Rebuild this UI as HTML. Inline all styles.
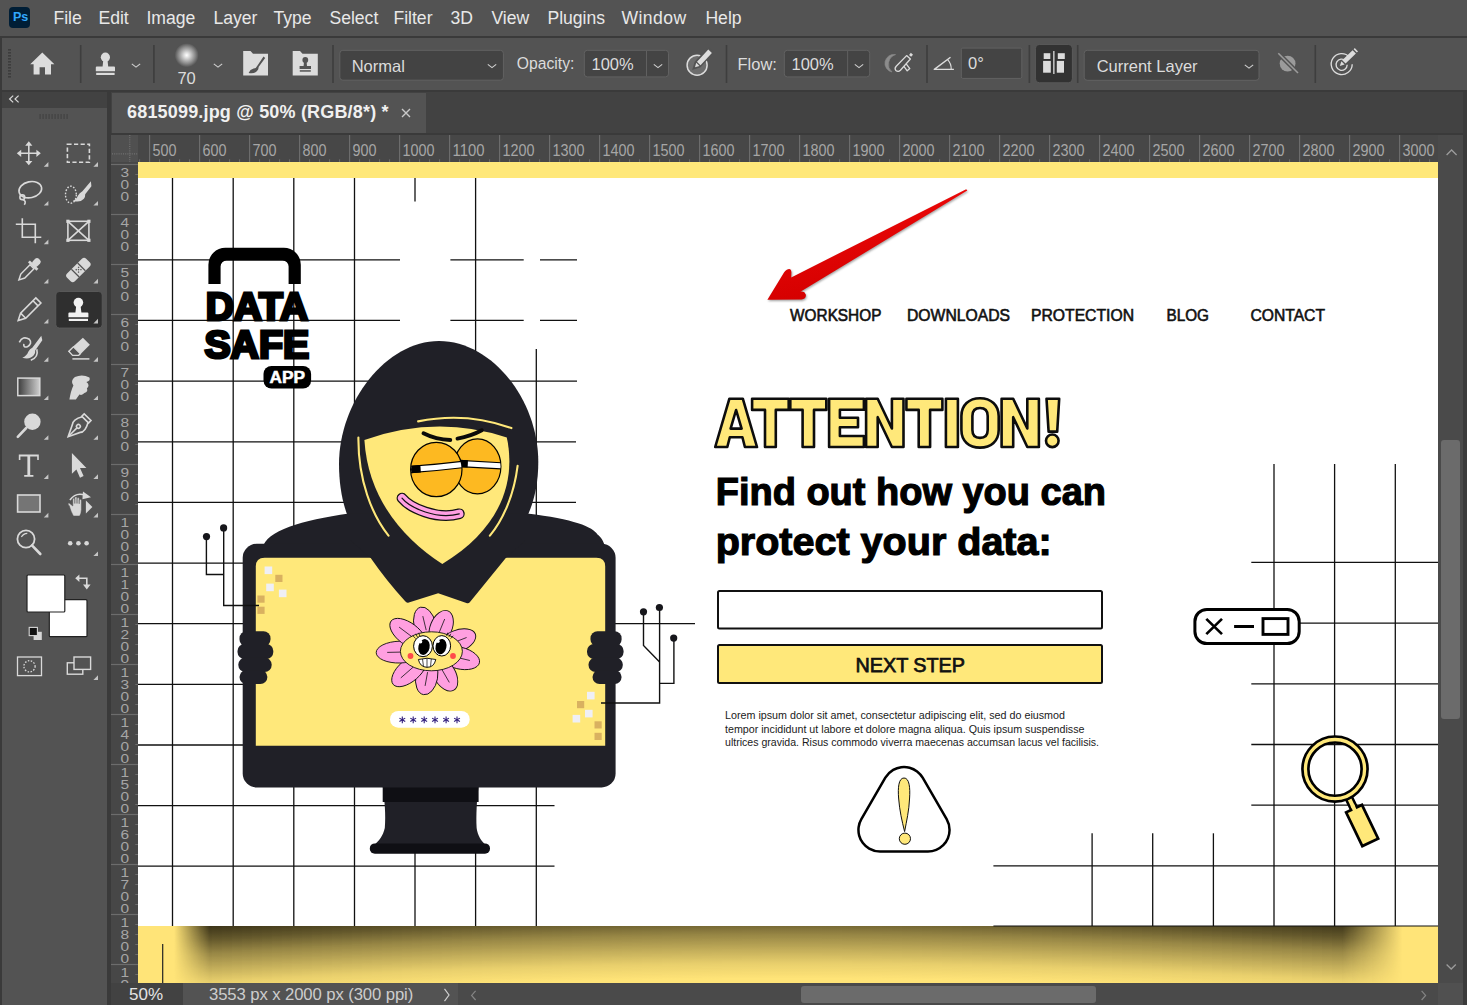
<!DOCTYPE html>
<html><head><meta charset="utf-8"><title>Photoshop</title>
<style>
*{box-sizing:border-box;margin:0;padding:0}
html,body{width:1467px;height:1005px;overflow:hidden;background:#535353;font-family:"Liberation Sans",sans-serif;color:#e6e6e6}
.abs{position:absolute}
#menubar{position:absolute;left:0;top:0;width:1467px;height:36px;background:#535353}
#menubar span{position:absolute;top:8px;font-size:17.6px;color:#e8e8e8;white-space:nowrap}
#sep1{position:absolute;left:0;top:36px;width:1467px;height:2px;background:#3a3a3a}
#optbar{position:absolute;left:2px;top:38px;width:1465px;height:52px;background:#535353}
#sep2{position:absolute;left:0;top:90px;width:1467px;height:2px;background:#3a3a3a}
#tabbar{position:absolute;left:111px;top:92px;width:1356px;height:42px;background:#424242}
#tab{position:absolute;left:1px;top:1px;width:314px;height:40px;background:#535353}
#tab b{position:absolute;left:15px;top:9px;letter-spacing:0.18px;font-size:18px;color:#f0f0f0;white-space:nowrap}
#tools{position:absolute;left:2px;top:92px;width:105px;height:913px;background:#535353}
#toolhead{position:absolute;left:0;top:0;width:105px;height:16px;background:#424242}
#gapL{position:absolute;left:107px;top:92px;width:4px;height:913px;background:#3a3a3a}
#edgeL{position:absolute;left:0;top:38px;width:2px;height:967px;background:#3a3a3a}
#rulerH{position:absolute;left:111px;top:134px;width:1327px;height:28px;background:#434343;overflow:hidden}
#rulerV{position:absolute;left:111px;top:162px;width:27px;height:821px;background:#434343;overflow:hidden}
#rcorner{position:absolute;left:111px;top:134px;width:27px;height:28px;background:#4f4f4f}
#canvas{position:absolute;left:138px;top:162px;width:1300px;height:821px;background:#fff;overflow:hidden}
#vscroll{position:absolute;left:1438px;top:134px;width:29px;height:849px;background:#4a4a4a}
#edgeR{position:absolute;left:1463px;top:92px;width:4px;height:913px;background:#3b3b3b}
#sep3{position:absolute;left:111px;top:133px;width:1352px;height:2px;background:#3a3a3a}
#status{position:absolute;left:111px;top:983px;width:1356px;height:22px;background:#4a4a4a}
</style></head><body>
<div id="menubar">
<div style="position:absolute;left:9.4px;top:7px;width:21px;height:20.6px;border-radius:4px;background:#001e36"></div>
<span style="left:13px;top:9.6px;font-size:12.6px;font-weight:bold;color:#31a8ff;letter-spacing:-0.2px">Ps</span>
<span style="left:53.4px">File</span><span style="left:98.4px">Edit</span><span style="left:146.4px">Image</span><span style="left:213.4px">Layer</span><span style="left:273.4px">Type</span><span style="left:329.4px">Select</span><span style="left:393.4px">Filter</span><span style="left:450.4px">3D</span><span style="left:491.4px">View</span><span style="left:547.4px">Plugins</span><span style="left:621.4px;letter-spacing:0.45px">Window</span><span style="left:705.4px">Help</span>
</div>
<div id="sep1"></div>
<div id="optbar"><svg width="1467" height="52" viewBox="0 38 1467 52" style="position:absolute;left:-2px;top:0;font-family:'Liberation Sans',sans-serif">
<defs><radialGradient id="brush"><stop offset="0" stop-color="#fff"/><stop offset="0.25" stop-color="#d8d8d8"/><stop offset="0.7" stop-color="#8a8a8a"/><stop offset="1" stop-color="#535353"/></radialGradient></defs>
<rect x="8" y="49" width="3" height="1.6" fill="#3d3d3d"/>
<rect x="8" y="52" width="3" height="1.6" fill="#3d3d3d"/>
<rect x="8" y="55" width="3" height="1.6" fill="#3d3d3d"/>
<rect x="8" y="58" width="3" height="1.6" fill="#3d3d3d"/>
<rect x="8" y="61" width="3" height="1.6" fill="#3d3d3d"/>
<rect x="8" y="64" width="3" height="1.6" fill="#3d3d3d"/>
<rect x="8" y="67" width="3" height="1.6" fill="#3d3d3d"/>
<rect x="8" y="70" width="3" height="1.6" fill="#3d3d3d"/>
<rect x="8" y="73" width="3" height="1.6" fill="#3d3d3d"/>
<rect x="8" y="76" width="3" height="1.6" fill="#3d3d3d"/>
<rect x="79.9" y="45" width="1.6" height="38" fill="#3e3e3e"/>
<rect x="153.1" y="45" width="1.6" height="38" fill="#3e3e3e"/>
<rect x="332.2" y="45" width="1.6" height="38" fill="#3e3e3e"/>
<rect x="725.7" y="45" width="1.6" height="38" fill="#3e3e3e"/>
<rect x="926.2" y="45" width="1.6" height="38" fill="#3e3e3e"/>
<rect x="1028.6000000000001" y="45" width="1.6" height="38" fill="#3e3e3e"/>
<rect x="1076.9" y="45" width="1.6" height="38" fill="#3e3e3e"/>
<rect x="1314.5" y="45" width="1.6" height="38" fill="#3e3e3e"/>
<path d="M42.3 52.6 L30.2 64.3 H33.6 V74.4 H39.6 V67.2 H45 V74.4 H51 V64.3 H54.4 Z" fill="#dcdcdc"/>
<g fill="#dcdcdc"><circle cx="105.4" cy="57.2" r="4.6"/><path d="M103.3 60 H107.5 L108.2 66.5 H114 Q115 66.5 115 67.5 V71.3 H95.8 V67.5 Q95.8 66.5 96.8 66.5 H102.6 Z"/><rect x="96.2" y="72.8" width="18.4" height="2.2"/></g>
<path d="M131.8 63.9 L136 67.1 L140.2 63.9" fill="none" stroke="#cfcfcf" stroke-width="1.15"/>
<circle cx="186.7" cy="55.2" r="12" fill="url(#brush)"/>
<text x="177.4" y="84.2" font-size="16.5" fill="#dcdcdc">70</text>
<path d="M213.8 63.9 L218 67.1 L222.2 63.9" fill="none" stroke="#cfcfcf" stroke-width="1.15"/>
<path d="M243.2 51 H250.5 L253 53.8 H268 V75.6 H243.2 Z" fill="#dcdcdc"/>
<path d="M263.5 56.5 L257.5 65.5 Q256.3 68.2 253.6 68.6 Q250 69.6 248.6 73 Q254 74 256.8 71.3 Q258.8 69.2 258.6 67 L265.2 58 Z" fill="#535353"/>
<path d="M292.7 51 H300 L302.5 53.8 H317.8 V75.6 H292.7 Z" fill="#dcdcdc"/>
<g fill="#535353"><circle cx="305.3" cy="60" r="2.9"/><path d="M304 62 H306.6 L307 66 H311 V69 H299.6 V66 H303.6 Z"/><rect x="299.8" y="70.2" width="11" height="1.5"/></g>
<rect x="339.8" y="50.3" width="163.59999999999997" height="29.900000000000006" rx="3" fill="#434343" stroke="#626262" stroke-width="1"/>
<text x="351.7" y="71.5" font-size="16.5" fill="#dcdcdc">Normal</text>
<path d="M487.8 64.4 L492 67.6 L496.2 64.4" fill="none" stroke="#cfcfcf" stroke-width="1.15"/>
<text x="516.8" y="69.3" font-size="16.3" fill="#dcdcdc" textLength="57.6" lengthAdjust="spacingAndGlyphs">Opacity:</text>
<rect x="584.3" y="50.3" width="84.20000000000005" height="26.60000000000001" rx="3" fill="#444444" stroke="#626262" stroke-width="1"/>
<rect x="646" y="50.8" width="1" height="25.6" fill="#606060"/>
<text x="591.5" y="69.5" font-size="16.5" fill="#dcdcdc">100%</text>
<path d="M653.8 64.4 L658 67.6 L662.2 64.4" fill="none" stroke="#cfcfcf" stroke-width="1.15"/>
<circle cx="697.1" cy="65.2" r="10" fill="#6d6d6d" stroke="#dcdcdc" stroke-width="1.5"/>
<path d="M712.6 52.6 L708.2 48.6 L695.6 62.2 L693.8 68.4 L700 66.4 Z" fill="#535353" stroke="#535353" stroke-width="2.2"/>
<path d="M711.9 52.9 L708.3 49.5 L697 61.7 L700.5 65.2 Z M696.2 62.8 L695 67.2 L699.5 66 Z" fill="#dcdcdc"/>
<text x="737.5" y="69.5" font-size="16.5" fill="#dcdcdc">Flow:</text>
<rect x="784.3" y="50.3" width="85.40000000000009" height="26.60000000000001" rx="3" fill="#444444" stroke="#626262" stroke-width="1"/>
<rect x="847.1" y="50.8" width="1" height="25.6" fill="#606060"/>
<text x="791.5" y="69.5" font-size="16.5" fill="#dcdcdc">100%</text>
<path d="M854.8 64.4 L859 67.6 L863.2 64.4" fill="none" stroke="#cfcfcf" stroke-width="1.15"/>
<path d="M895.6 54.6 A10.2 10.2 0 0 0 892 72 A7.6 7.6 0 0 1 895.6 54.6 Z" fill="#8c8c8c" stroke="#8c8c8c" stroke-width="0.6"/>
<g fill="#535353" stroke="#dcdcdc" stroke-width="1.3" stroke-linejoin="round"><path d="M903.2 65.4 L905.6 63.2 L909.8 68.6 L907.2 70.8 Z"/><path d="M906.6 55.6 L910.4 59 L900.4 70.2 Q898.2 72.4 895.8 70.4 Q894.2 68.4 896.2 66.2 Z"/></g>
<rect x="909.6" y="53.4" width="2.8" height="2.8" fill="#dcdcdc" transform="rotate(42 911 54.8)"/>
<path d="M953.9 69.4 H934.3 L950.5 57.3" fill="none" stroke="#dcdcdc" stroke-width="1.4" stroke-linejoin="round"/><path d="M947.6 59.6 Q951.4 63.6 951.2 69.2" fill="none" stroke="#dcdcdc" stroke-width="1.2"/>
<rect x="961.3" y="48.1" width="60.5" height="30.3" rx="1.5" fill="#444444" stroke="#626262" stroke-width="1"/>
<text x="968" y="68.8" font-size="16.5" fill="#dcdcdc">0°</text>
<rect x="1035.4" y="44.4" width="37" height="38.4" rx="4" fill="#323232" stroke="#5c5c5c" stroke-width="0.9"/>
<g fill="#dcdcdc"><rect x="1043.1" y="60.9" width="7.7" height="11.8"/><rect x="1043.7" y="53.2" width="6.6" height="5.8"/><rect x="1053.2" y="51" width="1.3" height="23"/><rect x="1056.8" y="60.9" width="7.2" height="11.8"/><rect x="1057.8" y="53.2" width="7" height="5.8"/></g>
<rect x="1084.2" y="50.3" width="174.79999999999995" height="30.0" rx="3" fill="#434343" stroke="#626262" stroke-width="1"/>
<text x="1096.7" y="71.5" font-size="16.5" fill="#dcdcdc">Current Layer</text>
<path d="M1244.8 64.9 L1249 68.1 L1253.2 64.9" fill="none" stroke="#cfcfcf" stroke-width="1.15"/>
<circle cx="1287.6" cy="63.6" r="7.9" fill="#9b9b9b"/><path d="M1278.6 53.6 L1297.8 72.8" stroke="#535353" stroke-width="4.4"/><path d="M1278.3 53.3 L1298 73" stroke="#9b9b9b" stroke-width="1.6"/>
<g fill="none" stroke="#dcdcdc" stroke-width="1.35"><path d="M1349.6 57.2 A10.5 10.5 0 1 0 1352.2 64.2"/><path d="M1345.6 60.8 A5.6 5.6 0 1 0 1347.2 64.8"/></g>
<path d="M1352.6 50.2 L1355.9 53.6 L1345.6 63.6 L1342.2 60.2 Z M1341.4 61.2 L1344.6 64.4 L1339.8 65.9 Z" fill="#dcdcdc"/><path d="M1353.6 49.3 L1356.8 52.6 L1358 51.4 L1354.8 48.1 Z" fill="#dcdcdc"/>
</svg></div>
<div id="sep2"></div>
<div id="edgeL"></div>
<div id="tools"><div id="toolhead"></div><svg width="105" height="913" viewBox="2 92 105 913" style="position:absolute;left:0;top:0;font-family:'Liberation Sans',sans-serif">
<path d="M13.2 95.6 L9.6 99 L13.2 102.4 M18.6 95.6 L15 99 L18.6 102.4" fill="none" stroke="#d9d9d9" stroke-width="1.2"/>
<rect x="39.4" y="114" width="1.3" height="5" fill="#444"/>
<rect x="42.4" y="114" width="1.3" height="5" fill="#444"/>
<rect x="45.4" y="114" width="1.3" height="5" fill="#444"/>
<rect x="48.4" y="114" width="1.3" height="5" fill="#444"/>
<rect x="51.4" y="114" width="1.3" height="5" fill="#444"/>
<rect x="54.4" y="114" width="1.3" height="5" fill="#444"/>
<rect x="57.4" y="114" width="1.3" height="5" fill="#444"/>
<rect x="60.4" y="114" width="1.3" height="5" fill="#444"/>
<rect x="63.4" y="114" width="1.3" height="5" fill="#444"/>
<rect x="66.4" y="114" width="1.3" height="5" fill="#444"/>
<rect x="55.8" y="291.5" width="46.4" height="36.5" rx="3.5" fill="#2f2f2f" stroke="#5e5e5e" stroke-width="0.8"/>
<path d="M48.400000000000006 162.10000000000002 V166.70000000000002 H43.8 Z" fill="#c4c4c4"/>
<path d="M98.0 162.10000000000002 V166.70000000000002 H93.4 Z" fill="#c4c4c4"/>
<path d="M48.400000000000006 201.0 V205.6 H43.8 Z" fill="#c4c4c4"/>
<path d="M98.0 201.0 V205.6 H93.4 Z" fill="#c4c4c4"/>
<path d="M48.400000000000006 239.60000000000002 V244.20000000000002 H43.8 Z" fill="#c4c4c4"/>
<path d="M48.400000000000006 278.8 V283.4 H43.8 Z" fill="#c4c4c4"/>
<path d="M98.0 278.8 V283.4 H93.4 Z" fill="#c4c4c4"/>
<path d="M48.400000000000006 318.8 V323.4 H43.8 Z" fill="#c4c4c4"/>
<path d="M98.0 318.8 V323.4 H93.4 Z" fill="#c4c4c4"/>
<path d="M48.400000000000006 357.1 V361.7 H43.8 Z" fill="#c4c4c4"/>
<path d="M98.0 357.1 V361.7 H93.4 Z" fill="#c4c4c4"/>
<path d="M48.400000000000006 395.40000000000003 V400.0 H43.8 Z" fill="#c4c4c4"/>
<path d="M98.0 395.40000000000003 V400.0 H93.4 Z" fill="#c4c4c4"/>
<path d="M48.400000000000006 435.2 V439.79999999999995 H43.8 Z" fill="#c4c4c4"/>
<path d="M98.0 435.2 V439.79999999999995 H93.4 Z" fill="#c4c4c4"/>
<path d="M48.400000000000006 474.3 V478.9 H43.8 Z" fill="#c4c4c4"/>
<path d="M98.0 474.3 V478.9 H93.4 Z" fill="#c4c4c4"/>
<path d="M48.400000000000006 512.8 V517.4 H43.8 Z" fill="#c4c4c4"/>
<path d="M98.0 512.8 V517.4 H93.4 Z" fill="#c4c4c4"/>
<path d="M98.0 551.4 V556.0 H93.4 Z" fill="#c4c4c4"/>
<g fill="none" stroke="#d9d9d9" stroke-width="1.6"><path d="M28.8 143.8 V162.8 M19.3 153.3 H38.3"/></g>
<path d="M28.8 141.3 l3.6 4.4 h-7.2 Z M28.8 165.3 l3.6 -4.4 h-7.2 Z M16.8 153.3 l4.4 -3.6 v7.2 Z M40.8 153.3 l-4.4 -3.6 v7.2 Z" fill="#d9d9d9"/>
<rect x="67.4" y="144.3" width="22" height="18" fill="none" stroke="#d9d9d9" stroke-width="1.6" stroke-dasharray="4.2 2.4"/>
<g fill="none" stroke="#d9d9d9" stroke-width="1.6"><ellipse cx="30.3" cy="189.7" rx="11.5" ry="8" transform="rotate(-12 30.3 189.7)"/><circle cx="22.3" cy="197.2" r="2.4"/><path d="M22.8 199.6 Q26.8 201.2 24.3 204.7"/></g>
<ellipse cx="70.9" cy="194.7" rx="5.4" ry="8.5" fill="none" stroke="#d9d9d9" stroke-width="1.4" stroke-dasharray="1.6 1.6"/>
<path d="M90.9 181.2 L82.4 191.2 Q79.4 192.7 77.9 195.7 Q76.4 199.7 72.9 200.7 Q79.9 203.2 83.9 198.7 Q85.4 196.7 85.2 194.2 L91.4 186.2 Z" fill="#d9d9d9"/>
<g fill="none" stroke="#d9d9d9" stroke-width="1.6" stroke-width="2"><path d="M22.3 218.3 V237.3 H41.3 M15.8 224.3 H35.3 V243.3"/></g>
<g fill="none" stroke="#d9d9d9" stroke-width="1.6"><rect x="67.9" y="221.3" width="21" height="19"/><path d="M67.9 221.3 L88.9 240.3 M88.9 221.3 L67.9 240.3"/></g>
<rect x="66.30000000000001" y="219.70000000000002" width="3.2" height="3.2" fill="#d9d9d9"/>
<rect x="87.30000000000001" y="219.70000000000002" width="3.2" height="3.2" fill="#d9d9d9"/>
<rect x="66.30000000000001" y="238.70000000000002" width="3.2" height="3.2" fill="#d9d9d9"/>
<rect x="87.30000000000001" y="238.70000000000002" width="3.2" height="3.2" fill="#d9d9d9"/>
<g transform="rotate(45 28.8 270)"><rect x="25.400000000000002" y="255" width="6.8" height="8.5" rx="2.6" fill="#d9d9d9"/><rect x="22.8" y="262.4" width="12" height="2.8" fill="#d9d9d9"/><path d="M26.0 265.5 V278.5 L28.8 284 L31.6 278.5 V265.5 Z" fill="none" stroke="#d9d9d9" stroke-width="1.5"/></g>
<g transform="rotate(-45 78.4 270)"><rect x="64.9" y="264.5" width="27" height="11" rx="3" fill="#d9d9d9"/><rect x="73.4" y="264.5" width="1.2" height="11" fill="#535353"/><rect x="82.2" y="264.5" width="1.2" height="11" fill="#535353"/>
<rect x="76.4" y="267.6" width="1.3" height="1.3" fill="#535353"/>
<rect x="79.80000000000001" y="267.6" width="1.3" height="1.3" fill="#535353"/>
<rect x="76.4" y="270.9" width="1.3" height="1.3" fill="#535353"/>
<rect x="79.80000000000001" y="270.9" width="1.3" height="1.3" fill="#535353"/>
<rect x="78.10000000000001" y="269.2" width="1.3" height="1.3" fill="#535353"/>
</g>
<g transform="rotate(45 28.8 310)" fill="none" stroke="#d9d9d9" stroke-width="1.6"><path d="M25.2 296.5 H32.4 V318 L28.8 325 L25.2 318 Z"/><path d="M25.2 300.5 H32.4 M25.2 318 H32.4"/></g>
<g fill="#f2f2f2"><circle cx="78.4" cy="302.6" r="4.8"/><path d="M76.2 306 H80.60000000000001 L81.4 312.4 H87.4 Q88.4 312.4 88.4 313.4 V317.2 H68.4 V313.4 Q68.4 312.4 69.4 312.4 H75.4 Z"/><rect x="68.80000000000001" y="318.8" width="19.2" height="2.2"/></g>
<g fill="none" stroke="#d9d9d9" stroke-width="1.6" stroke-width="1.4"><path d="M19.3 342.3 Q22.8 335.3 29.3 339.3 Q32.8 343.3 27.3 346.8 Q23.3 347.8 23.8 343.8"/><path d="M36.8 349.3 Q38.8 357.3 30.8 360.3"/></g>
<path d="M41.3 335.8 L32.3 347.8 Q29.8 348.8 28.3 351.8 Q26.8 355.8 22.3 357.8 Q30.3 359.8 33.8 355.3 Q35.6 352.90000000000003 35.2 350.5 L42.3 340.3 Z" fill="#d9d9d9"/>
<path d="M82.9 337.8 L89.9 344.8 L78.9 355.8 H72.4 L67.9 351.3 Z" fill="#d9d9d9"/><path d="M73.4 346.8 L80.4 353.8 L78.60000000000001 355.3 H72.60000000000001 L69.0 351.3 Z" fill="#535353" stroke="#d9d9d9" stroke-width="1.2"/><path d="M72.4 358.90000000000003 H89.4" stroke="#d9d9d9" stroke-width="1.5"/>
<defs><linearGradient id="gr"><stop offset="0" stop-color="#3c3c3c"/><stop offset="1" stop-color="#d0d0d0"/></linearGradient></defs><rect x="17.8" y="378.1" width="22" height="17.5" fill="url(#gr)" stroke="#d9d9d9" stroke-width="1.5"/>
<path d="M69.4 399.6 Q70.9 390.6 73.4 385.6 Q69.9 381.1 74.9 377.1 Q82.4 373.6 89.4 377.6 Q90.9 380.6 86.4 382.1 Q90.4 385.1 86.9 388.6 Q88.4 391.6 84.4 393.1 Q82.4 395.6 79.4 394.6 L75.9 399.6 Z" fill="#d9d9d9"/>
<circle cx="32.4" cy="421.79999999999995" r="8.2" fill="#d9d9d9"/><path d="M26.2 428.0 L17.8 436.9" stroke="#d9d9d9" stroke-width="2.6" stroke-linecap="round"/>
<g transform="rotate(45 78.4 426.4)" fill="none" stroke="#d9d9d9" stroke-width="1.6" stroke-width="1.5"><path d="M73.60000000000001 413.4 H83.2 V416.79999999999995 H73.60000000000001 Z"/><path d="M74.4 416.79999999999995 Q69.4 425.4 72.9 429.4 L78.4 440.9 L83.9 429.4 Q87.4 425.4 82.4 416.79999999999995"/><path d="M78.4 440.4 V428.4"/><circle cx="78.4" cy="426.4" r="1.9"/></g>
<path d="M18.8 454.5 H38.8 V460.0 H37.2 V456.5 H30.2 V475.0 H33.4 V476.7 H24.200000000000003 V475.0 H27.400000000000002 V456.5 H20.4 V460.0 H18.8 Z" fill="#d9d9d9"/>
<path d="M71.9 453.0 L86.4 468.0 H80.0 L83.60000000000001 476.1 L80.0 477.7 L76.4 469.5 L71.9 473.8 Z" fill="#d9d9d9"/>
<rect x="17.6" y="495" width="22.4" height="17" fill="#757575" stroke="#d9d9d9" stroke-width="1.6"/>
<path d="M69.9 500 Q76.4 491.5 85.4 495.5" fill="none" stroke="#d9d9d9" stroke-width="1.6"/><path d="M83.0 491.6 L91.0 497.2 L82.4 499.2 Z" fill="#d9d9d9"/>
<path d="M85.9 500.5 L92.4 507 L85.9 513.5 Z" fill="#d9d9d9"/>
<path d="M69.4 506 Q66.9 503.5 69.10000000000001 503 L72.80000000000001 506 V499 Q73.7 497.4 74.80000000000001 499 V503.5 V497.5 Q75.9 496 77.0 497.5 V503.5 V498.2 Q78.10000000000001 496.7 79.2 498.2 V503.8 V500 Q80.30000000000001 498.6 81.4 500 V509.5 Q81.2 514 79.7 516 H73.4 Q70.80000000000001 511.5 69.4 506 Z" fill="#d9d9d9" stroke="#535353" stroke-width="0.5"/>
<circle cx="26.0" cy="539.0" r="8.6" fill="none" stroke="#d9d9d9" stroke-width="1.8"/><path d="M32.0 545.4 L40.3 554.0" stroke="#d9d9d9" stroke-width="2.6" stroke-linecap="round"/><path d="M21.4 537.1 Q23.3 533.4 27.3 533.3000000000001" fill="none" stroke="#d9d9d9" stroke-width="1.2"/>
<circle cx="70.2" cy="543.2" r="2.3" fill="#d9d9d9"/>
<circle cx="78.4" cy="543.2" r="2.3" fill="#d9d9d9"/>
<circle cx="86.60000000000001" cy="543.2" r="2.3" fill="#d9d9d9"/>
<rect x="49.3" y="599.7" width="37.7" height="37" rx="1" fill="#fff" stroke="#222" stroke-width="1.2"/>
<rect x="27" y="575" width="37.8" height="37" rx="1" fill="#fff" stroke="#222" stroke-width="1.2"/>
<path d="M77.5 578.2 H86.8 V586" fill="none" stroke="#d9d9d9" stroke-width="1.6"/><path d="M79.4 574.4 L75.2 578.2 L79.4 582 Z M83 584.5 L86.8 589.4 L90.6 584.5 Z" fill="#d9d9d9"/>
<rect x="33.6" y="631.8" width="8.2" height="8.2" fill="#d6d6d6"/><rect x="29.2" y="627.4" width="8.2" height="8.2" fill="#111" stroke="#d6d6d6" stroke-width="1.1"/>
<rect x="17.5" y="657" width="24" height="18.6" fill="none" stroke="#d9d9d9" stroke-width="1.3"/><circle cx="29.5" cy="666.3" r="5.6" fill="none" stroke="#d9d9d9" stroke-width="1.3" stroke-dasharray="1.5 1.5"/>
<rect x="67.3" y="662.8" width="15.5" height="11.4" fill="#535353" stroke="#d9d9d9" stroke-width="1.4"/><rect x="74" y="657" width="16.6" height="12.4" fill="#535353" stroke="#d9d9d9" stroke-width="1.4"/>
<path d="M98.0 675.3 V679.9 H93.4 Z" fill="#c4c4c4"/>
</svg></div>
<div id="gapL"></div>
<div id="tabbar"><div id="tab"><b>6815099.jpg @ 50% (RGB/8*) *</b><svg width="14" height="14" style="position:absolute;left:287px;top:13.2px"><path d="M3 3 L11 11 M11 3 L3 11" stroke="#c9c9c9" stroke-width="1.4"/></svg></div></div>
<svg width="1327" height="29" viewBox="111 133 1327 29" style="position:absolute;left:111px;top:133px;font-family:'Liberation Sans',sans-serif">
<rect x="111" y="133" width="1327" height="29" fill="#474747"/><rect x="111" y="133" width="1327" height="2" fill="#3a3a3a"/>
<rect x="139.1" y="159.3" width="1" height="2.7" fill="#6c6c6c"/>
<rect x="149.0" y="135" width="1.2" height="27" fill="#6c6c6c"/>
<text x="152.5" y="156" font-size="16" fill="#a6a6a6" textLength="24.0" lengthAdjust="spacingAndGlyphs">500</text>
<rect x="159.1" y="159.3" width="1" height="2.7" fill="#6c6c6c"/>
<rect x="169.1" y="159.3" width="1" height="2.7" fill="#6c6c6c"/>
<rect x="179.1" y="159.3" width="1" height="2.7" fill="#6c6c6c"/>
<rect x="189.1" y="159.3" width="1" height="2.7" fill="#6c6c6c"/>
<rect x="199.0" y="135" width="1.2" height="27" fill="#6c6c6c"/>
<text x="202.5" y="156" font-size="16" fill="#a6a6a6" textLength="24.0" lengthAdjust="spacingAndGlyphs">600</text>
<rect x="209.1" y="159.3" width="1" height="2.7" fill="#6c6c6c"/>
<rect x="219.1" y="159.3" width="1" height="2.7" fill="#6c6c6c"/>
<rect x="229.1" y="159.3" width="1" height="2.7" fill="#6c6c6c"/>
<rect x="239.1" y="159.3" width="1" height="2.7" fill="#6c6c6c"/>
<rect x="249.0" y="135" width="1.2" height="27" fill="#6c6c6c"/>
<text x="252.5" y="156" font-size="16" fill="#a6a6a6" textLength="24.0" lengthAdjust="spacingAndGlyphs">700</text>
<rect x="259.1" y="159.3" width="1" height="2.7" fill="#6c6c6c"/>
<rect x="269.1" y="159.3" width="1" height="2.7" fill="#6c6c6c"/>
<rect x="279.1" y="159.3" width="1" height="2.7" fill="#6c6c6c"/>
<rect x="289.1" y="159.3" width="1" height="2.7" fill="#6c6c6c"/>
<rect x="299.0" y="135" width="1.2" height="27" fill="#6c6c6c"/>
<text x="302.5" y="156" font-size="16" fill="#a6a6a6" textLength="24.0" lengthAdjust="spacingAndGlyphs">800</text>
<rect x="309.1" y="159.3" width="1" height="2.7" fill="#6c6c6c"/>
<rect x="319.1" y="159.3" width="1" height="2.7" fill="#6c6c6c"/>
<rect x="329.1" y="159.3" width="1" height="2.7" fill="#6c6c6c"/>
<rect x="339.1" y="159.3" width="1" height="2.7" fill="#6c6c6c"/>
<rect x="349.0" y="135" width="1.2" height="27" fill="#6c6c6c"/>
<text x="352.5" y="156" font-size="16" fill="#a6a6a6" textLength="24.0" lengthAdjust="spacingAndGlyphs">900</text>
<rect x="359.1" y="159.3" width="1" height="2.7" fill="#6c6c6c"/>
<rect x="369.1" y="159.3" width="1" height="2.7" fill="#6c6c6c"/>
<rect x="379.1" y="159.3" width="1" height="2.7" fill="#6c6c6c"/>
<rect x="389.1" y="159.3" width="1" height="2.7" fill="#6c6c6c"/>
<rect x="399.0" y="135" width="1.2" height="27" fill="#6c6c6c"/>
<text x="402.5" y="156" font-size="16" fill="#a6a6a6" textLength="32.0" lengthAdjust="spacingAndGlyphs">1000</text>
<rect x="409.1" y="159.3" width="1" height="2.7" fill="#6c6c6c"/>
<rect x="419.1" y="159.3" width="1" height="2.7" fill="#6c6c6c"/>
<rect x="429.1" y="159.3" width="1" height="2.7" fill="#6c6c6c"/>
<rect x="439.1" y="159.3" width="1" height="2.7" fill="#6c6c6c"/>
<rect x="449.0" y="135" width="1.2" height="27" fill="#6c6c6c"/>
<text x="452.5" y="156" font-size="16" fill="#a6a6a6" textLength="32.0" lengthAdjust="spacingAndGlyphs">1100</text>
<rect x="459.1" y="159.3" width="1" height="2.7" fill="#6c6c6c"/>
<rect x="469.1" y="159.3" width="1" height="2.7" fill="#6c6c6c"/>
<rect x="479.1" y="159.3" width="1" height="2.7" fill="#6c6c6c"/>
<rect x="489.1" y="159.3" width="1" height="2.7" fill="#6c6c6c"/>
<rect x="499.0" y="135" width="1.2" height="27" fill="#6c6c6c"/>
<text x="502.5" y="156" font-size="16" fill="#a6a6a6" textLength="32.0" lengthAdjust="spacingAndGlyphs">1200</text>
<rect x="509.1" y="159.3" width="1" height="2.7" fill="#6c6c6c"/>
<rect x="519.1" y="159.3" width="1" height="2.7" fill="#6c6c6c"/>
<rect x="529.1" y="159.3" width="1" height="2.7" fill="#6c6c6c"/>
<rect x="539.1" y="159.3" width="1" height="2.7" fill="#6c6c6c"/>
<rect x="549.0" y="135" width="1.2" height="27" fill="#6c6c6c"/>
<text x="552.5" y="156" font-size="16" fill="#a6a6a6" textLength="32.0" lengthAdjust="spacingAndGlyphs">1300</text>
<rect x="559.1" y="159.3" width="1" height="2.7" fill="#6c6c6c"/>
<rect x="569.1" y="159.3" width="1" height="2.7" fill="#6c6c6c"/>
<rect x="579.1" y="159.3" width="1" height="2.7" fill="#6c6c6c"/>
<rect x="589.1" y="159.3" width="1" height="2.7" fill="#6c6c6c"/>
<rect x="599.0" y="135" width="1.2" height="27" fill="#6c6c6c"/>
<text x="602.5" y="156" font-size="16" fill="#a6a6a6" textLength="32.0" lengthAdjust="spacingAndGlyphs">1400</text>
<rect x="609.1" y="159.3" width="1" height="2.7" fill="#6c6c6c"/>
<rect x="619.1" y="159.3" width="1" height="2.7" fill="#6c6c6c"/>
<rect x="629.1" y="159.3" width="1" height="2.7" fill="#6c6c6c"/>
<rect x="639.1" y="159.3" width="1" height="2.7" fill="#6c6c6c"/>
<rect x="649.0" y="135" width="1.2" height="27" fill="#6c6c6c"/>
<text x="652.5" y="156" font-size="16" fill="#a6a6a6" textLength="32.0" lengthAdjust="spacingAndGlyphs">1500</text>
<rect x="659.1" y="159.3" width="1" height="2.7" fill="#6c6c6c"/>
<rect x="669.1" y="159.3" width="1" height="2.7" fill="#6c6c6c"/>
<rect x="679.1" y="159.3" width="1" height="2.7" fill="#6c6c6c"/>
<rect x="689.1" y="159.3" width="1" height="2.7" fill="#6c6c6c"/>
<rect x="699.0" y="135" width="1.2" height="27" fill="#6c6c6c"/>
<text x="702.5" y="156" font-size="16" fill="#a6a6a6" textLength="32.0" lengthAdjust="spacingAndGlyphs">1600</text>
<rect x="709.1" y="159.3" width="1" height="2.7" fill="#6c6c6c"/>
<rect x="719.1" y="159.3" width="1" height="2.7" fill="#6c6c6c"/>
<rect x="729.1" y="159.3" width="1" height="2.7" fill="#6c6c6c"/>
<rect x="739.1" y="159.3" width="1" height="2.7" fill="#6c6c6c"/>
<rect x="749.0" y="135" width="1.2" height="27" fill="#6c6c6c"/>
<text x="752.5" y="156" font-size="16" fill="#a6a6a6" textLength="32.0" lengthAdjust="spacingAndGlyphs">1700</text>
<rect x="759.1" y="159.3" width="1" height="2.7" fill="#6c6c6c"/>
<rect x="769.1" y="159.3" width="1" height="2.7" fill="#6c6c6c"/>
<rect x="779.1" y="159.3" width="1" height="2.7" fill="#6c6c6c"/>
<rect x="789.1" y="159.3" width="1" height="2.7" fill="#6c6c6c"/>
<rect x="799.0" y="135" width="1.2" height="27" fill="#6c6c6c"/>
<text x="802.5" y="156" font-size="16" fill="#a6a6a6" textLength="32.0" lengthAdjust="spacingAndGlyphs">1800</text>
<rect x="809.1" y="159.3" width="1" height="2.7" fill="#6c6c6c"/>
<rect x="819.1" y="159.3" width="1" height="2.7" fill="#6c6c6c"/>
<rect x="829.1" y="159.3" width="1" height="2.7" fill="#6c6c6c"/>
<rect x="839.1" y="159.3" width="1" height="2.7" fill="#6c6c6c"/>
<rect x="849.0" y="135" width="1.2" height="27" fill="#6c6c6c"/>
<text x="852.5" y="156" font-size="16" fill="#a6a6a6" textLength="32.0" lengthAdjust="spacingAndGlyphs">1900</text>
<rect x="859.1" y="159.3" width="1" height="2.7" fill="#6c6c6c"/>
<rect x="869.1" y="159.3" width="1" height="2.7" fill="#6c6c6c"/>
<rect x="879.1" y="159.3" width="1" height="2.7" fill="#6c6c6c"/>
<rect x="889.1" y="159.3" width="1" height="2.7" fill="#6c6c6c"/>
<rect x="899.0" y="135" width="1.2" height="27" fill="#6c6c6c"/>
<text x="902.5" y="156" font-size="16" fill="#a6a6a6" textLength="32.0" lengthAdjust="spacingAndGlyphs">2000</text>
<rect x="909.1" y="159.3" width="1" height="2.7" fill="#6c6c6c"/>
<rect x="919.1" y="159.3" width="1" height="2.7" fill="#6c6c6c"/>
<rect x="929.1" y="159.3" width="1" height="2.7" fill="#6c6c6c"/>
<rect x="939.1" y="159.3" width="1" height="2.7" fill="#6c6c6c"/>
<rect x="949.0" y="135" width="1.2" height="27" fill="#6c6c6c"/>
<text x="952.5" y="156" font-size="16" fill="#a6a6a6" textLength="32.0" lengthAdjust="spacingAndGlyphs">2100</text>
<rect x="959.1" y="159.3" width="1" height="2.7" fill="#6c6c6c"/>
<rect x="969.1" y="159.3" width="1" height="2.7" fill="#6c6c6c"/>
<rect x="979.1" y="159.3" width="1" height="2.7" fill="#6c6c6c"/>
<rect x="989.1" y="159.3" width="1" height="2.7" fill="#6c6c6c"/>
<rect x="999.0" y="135" width="1.2" height="27" fill="#6c6c6c"/>
<text x="1002.5" y="156" font-size="16" fill="#a6a6a6" textLength="32.0" lengthAdjust="spacingAndGlyphs">2200</text>
<rect x="1009.1" y="159.3" width="1" height="2.7" fill="#6c6c6c"/>
<rect x="1019.1" y="159.3" width="1" height="2.7" fill="#6c6c6c"/>
<rect x="1029.1" y="159.3" width="1" height="2.7" fill="#6c6c6c"/>
<rect x="1039.1" y="159.3" width="1" height="2.7" fill="#6c6c6c"/>
<rect x="1049.0" y="135" width="1.2" height="27" fill="#6c6c6c"/>
<text x="1052.5" y="156" font-size="16" fill="#a6a6a6" textLength="32.0" lengthAdjust="spacingAndGlyphs">2300</text>
<rect x="1059.1" y="159.3" width="1" height="2.7" fill="#6c6c6c"/>
<rect x="1069.1" y="159.3" width="1" height="2.7" fill="#6c6c6c"/>
<rect x="1079.1" y="159.3" width="1" height="2.7" fill="#6c6c6c"/>
<rect x="1089.1" y="159.3" width="1" height="2.7" fill="#6c6c6c"/>
<rect x="1099.0" y="135" width="1.2" height="27" fill="#6c6c6c"/>
<text x="1102.5" y="156" font-size="16" fill="#a6a6a6" textLength="32.0" lengthAdjust="spacingAndGlyphs">2400</text>
<rect x="1109.1" y="159.3" width="1" height="2.7" fill="#6c6c6c"/>
<rect x="1119.1" y="159.3" width="1" height="2.7" fill="#6c6c6c"/>
<rect x="1129.1" y="159.3" width="1" height="2.7" fill="#6c6c6c"/>
<rect x="1139.1" y="159.3" width="1" height="2.7" fill="#6c6c6c"/>
<rect x="1149.0" y="135" width="1.2" height="27" fill="#6c6c6c"/>
<text x="1152.5" y="156" font-size="16" fill="#a6a6a6" textLength="32.0" lengthAdjust="spacingAndGlyphs">2500</text>
<rect x="1159.1" y="159.3" width="1" height="2.7" fill="#6c6c6c"/>
<rect x="1169.1" y="159.3" width="1" height="2.7" fill="#6c6c6c"/>
<rect x="1179.1" y="159.3" width="1" height="2.7" fill="#6c6c6c"/>
<rect x="1189.1" y="159.3" width="1" height="2.7" fill="#6c6c6c"/>
<rect x="1199.0" y="135" width="1.2" height="27" fill="#6c6c6c"/>
<text x="1202.5" y="156" font-size="16" fill="#a6a6a6" textLength="32.0" lengthAdjust="spacingAndGlyphs">2600</text>
<rect x="1209.1" y="159.3" width="1" height="2.7" fill="#6c6c6c"/>
<rect x="1219.1" y="159.3" width="1" height="2.7" fill="#6c6c6c"/>
<rect x="1229.1" y="159.3" width="1" height="2.7" fill="#6c6c6c"/>
<rect x="1239.1" y="159.3" width="1" height="2.7" fill="#6c6c6c"/>
<rect x="1249.0" y="135" width="1.2" height="27" fill="#6c6c6c"/>
<text x="1252.5" y="156" font-size="16" fill="#a6a6a6" textLength="32.0" lengthAdjust="spacingAndGlyphs">2700</text>
<rect x="1259.1" y="159.3" width="1" height="2.7" fill="#6c6c6c"/>
<rect x="1269.1" y="159.3" width="1" height="2.7" fill="#6c6c6c"/>
<rect x="1279.1" y="159.3" width="1" height="2.7" fill="#6c6c6c"/>
<rect x="1289.1" y="159.3" width="1" height="2.7" fill="#6c6c6c"/>
<rect x="1299.0" y="135" width="1.2" height="27" fill="#6c6c6c"/>
<text x="1302.5" y="156" font-size="16" fill="#a6a6a6" textLength="32.0" lengthAdjust="spacingAndGlyphs">2800</text>
<rect x="1309.1" y="159.3" width="1" height="2.7" fill="#6c6c6c"/>
<rect x="1319.1" y="159.3" width="1" height="2.7" fill="#6c6c6c"/>
<rect x="1329.1" y="159.3" width="1" height="2.7" fill="#6c6c6c"/>
<rect x="1339.1" y="159.3" width="1" height="2.7" fill="#6c6c6c"/>
<rect x="1349.0" y="135" width="1.2" height="27" fill="#6c6c6c"/>
<text x="1352.5" y="156" font-size="16" fill="#a6a6a6" textLength="32.0" lengthAdjust="spacingAndGlyphs">2900</text>
<rect x="1359.1" y="159.3" width="1" height="2.7" fill="#6c6c6c"/>
<rect x="1369.1" y="159.3" width="1" height="2.7" fill="#6c6c6c"/>
<rect x="1379.1" y="159.3" width="1" height="2.7" fill="#6c6c6c"/>
<rect x="1389.1" y="159.3" width="1" height="2.7" fill="#6c6c6c"/>
<rect x="1399.0" y="135" width="1.2" height="27" fill="#6c6c6c"/>
<text x="1402.5" y="156" font-size="16" fill="#a6a6a6" textLength="32.0" lengthAdjust="spacingAndGlyphs">3000</text>
<rect x="1409.1" y="159.3" width="1" height="2.7" fill="#6c6c6c"/>
<rect x="1419.1" y="159.3" width="1" height="2.7" fill="#6c6c6c"/>
<rect x="1429.1" y="159.3" width="1" height="2.7" fill="#6c6c6c"/>
</svg>
<svg width="27" height="821" viewBox="111 162 27 821" style="position:absolute;left:111px;top:162px;font-family:'Liberation Sans',sans-serif">
<rect x="111" y="162" width="27" height="821" fill="#474747"/>
<rect x="111" y="163.9" width="27" height="1.2" fill="#6c6c6c"/>
<text transform="translate(120.4 177.4) scale(1 0.87)" font-size="15.2" fill="#a6a6a6" textLength="8.6" lengthAdjust="spacingAndGlyphs">3</text>
<text transform="translate(120.4 189.3) scale(1 0.87)" font-size="15.2" fill="#a6a6a6" textLength="8.6" lengthAdjust="spacingAndGlyphs">0</text>
<text transform="translate(120.4 201.2) scale(1 0.87)" font-size="15.2" fill="#a6a6a6" textLength="8.6" lengthAdjust="spacingAndGlyphs">0</text>
<rect x="135.3" y="174.0" width="2.7" height="1" fill="#6c6c6c"/>
<rect x="135.3" y="184.0" width="2.7" height="1" fill="#6c6c6c"/>
<rect x="135.3" y="194.0" width="2.7" height="1" fill="#6c6c6c"/>
<rect x="135.3" y="204.0" width="2.7" height="1" fill="#6c6c6c"/>
<rect x="111" y="213.9" width="27" height="1.2" fill="#6c6c6c"/>
<text transform="translate(120.4 227.4) scale(1 0.87)" font-size="15.2" fill="#a6a6a6" textLength="8.6" lengthAdjust="spacingAndGlyphs">4</text>
<text transform="translate(120.4 239.3) scale(1 0.87)" font-size="15.2" fill="#a6a6a6" textLength="8.6" lengthAdjust="spacingAndGlyphs">0</text>
<text transform="translate(120.4 251.2) scale(1 0.87)" font-size="15.2" fill="#a6a6a6" textLength="8.6" lengthAdjust="spacingAndGlyphs">0</text>
<rect x="135.3" y="224.0" width="2.7" height="1" fill="#6c6c6c"/>
<rect x="135.3" y="234.0" width="2.7" height="1" fill="#6c6c6c"/>
<rect x="135.3" y="244.0" width="2.7" height="1" fill="#6c6c6c"/>
<rect x="135.3" y="254.0" width="2.7" height="1" fill="#6c6c6c"/>
<rect x="111" y="263.9" width="27" height="1.2" fill="#6c6c6c"/>
<text transform="translate(120.4 277.4) scale(1 0.87)" font-size="15.2" fill="#a6a6a6" textLength="8.6" lengthAdjust="spacingAndGlyphs">5</text>
<text transform="translate(120.4 289.3) scale(1 0.87)" font-size="15.2" fill="#a6a6a6" textLength="8.6" lengthAdjust="spacingAndGlyphs">0</text>
<text transform="translate(120.4 301.2) scale(1 0.87)" font-size="15.2" fill="#a6a6a6" textLength="8.6" lengthAdjust="spacingAndGlyphs">0</text>
<rect x="135.3" y="274.0" width="2.7" height="1" fill="#6c6c6c"/>
<rect x="135.3" y="284.0" width="2.7" height="1" fill="#6c6c6c"/>
<rect x="135.3" y="294.0" width="2.7" height="1" fill="#6c6c6c"/>
<rect x="135.3" y="304.0" width="2.7" height="1" fill="#6c6c6c"/>
<rect x="111" y="313.9" width="27" height="1.2" fill="#6c6c6c"/>
<text transform="translate(120.4 327.4) scale(1 0.87)" font-size="15.2" fill="#a6a6a6" textLength="8.6" lengthAdjust="spacingAndGlyphs">6</text>
<text transform="translate(120.4 339.3) scale(1 0.87)" font-size="15.2" fill="#a6a6a6" textLength="8.6" lengthAdjust="spacingAndGlyphs">0</text>
<text transform="translate(120.4 351.2) scale(1 0.87)" font-size="15.2" fill="#a6a6a6" textLength="8.6" lengthAdjust="spacingAndGlyphs">0</text>
<rect x="135.3" y="324.0" width="2.7" height="1" fill="#6c6c6c"/>
<rect x="135.3" y="334.0" width="2.7" height="1" fill="#6c6c6c"/>
<rect x="135.3" y="344.0" width="2.7" height="1" fill="#6c6c6c"/>
<rect x="135.3" y="354.0" width="2.7" height="1" fill="#6c6c6c"/>
<rect x="111" y="363.9" width="27" height="1.2" fill="#6c6c6c"/>
<text transform="translate(120.4 377.4) scale(1 0.87)" font-size="15.2" fill="#a6a6a6" textLength="8.6" lengthAdjust="spacingAndGlyphs">7</text>
<text transform="translate(120.4 389.3) scale(1 0.87)" font-size="15.2" fill="#a6a6a6" textLength="8.6" lengthAdjust="spacingAndGlyphs">0</text>
<text transform="translate(120.4 401.2) scale(1 0.87)" font-size="15.2" fill="#a6a6a6" textLength="8.6" lengthAdjust="spacingAndGlyphs">0</text>
<rect x="135.3" y="374.0" width="2.7" height="1" fill="#6c6c6c"/>
<rect x="135.3" y="384.0" width="2.7" height="1" fill="#6c6c6c"/>
<rect x="135.3" y="394.0" width="2.7" height="1" fill="#6c6c6c"/>
<rect x="135.3" y="404.0" width="2.7" height="1" fill="#6c6c6c"/>
<rect x="111" y="413.9" width="27" height="1.2" fill="#6c6c6c"/>
<text transform="translate(120.4 427.4) scale(1 0.87)" font-size="15.2" fill="#a6a6a6" textLength="8.6" lengthAdjust="spacingAndGlyphs">8</text>
<text transform="translate(120.4 439.3) scale(1 0.87)" font-size="15.2" fill="#a6a6a6" textLength="8.6" lengthAdjust="spacingAndGlyphs">0</text>
<text transform="translate(120.4 451.2) scale(1 0.87)" font-size="15.2" fill="#a6a6a6" textLength="8.6" lengthAdjust="spacingAndGlyphs">0</text>
<rect x="135.3" y="424.0" width="2.7" height="1" fill="#6c6c6c"/>
<rect x="135.3" y="434.0" width="2.7" height="1" fill="#6c6c6c"/>
<rect x="135.3" y="444.0" width="2.7" height="1" fill="#6c6c6c"/>
<rect x="135.3" y="454.0" width="2.7" height="1" fill="#6c6c6c"/>
<rect x="111" y="463.9" width="27" height="1.2" fill="#6c6c6c"/>
<text transform="translate(120.4 477.4) scale(1 0.87)" font-size="15.2" fill="#a6a6a6" textLength="8.6" lengthAdjust="spacingAndGlyphs">9</text>
<text transform="translate(120.4 489.3) scale(1 0.87)" font-size="15.2" fill="#a6a6a6" textLength="8.6" lengthAdjust="spacingAndGlyphs">0</text>
<text transform="translate(120.4 501.2) scale(1 0.87)" font-size="15.2" fill="#a6a6a6" textLength="8.6" lengthAdjust="spacingAndGlyphs">0</text>
<rect x="135.3" y="474.0" width="2.7" height="1" fill="#6c6c6c"/>
<rect x="135.3" y="484.0" width="2.7" height="1" fill="#6c6c6c"/>
<rect x="135.3" y="494.0" width="2.7" height="1" fill="#6c6c6c"/>
<rect x="135.3" y="504.0" width="2.7" height="1" fill="#6c6c6c"/>
<rect x="111" y="513.9" width="27" height="1.2" fill="#6c6c6c"/>
<text transform="translate(120.4 527.4) scale(1 0.87)" font-size="15.2" fill="#a6a6a6" textLength="8.6" lengthAdjust="spacingAndGlyphs">1</text>
<text transform="translate(120.4 539.3) scale(1 0.87)" font-size="15.2" fill="#a6a6a6" textLength="8.6" lengthAdjust="spacingAndGlyphs">0</text>
<text transform="translate(120.4 551.2) scale(1 0.87)" font-size="15.2" fill="#a6a6a6" textLength="8.6" lengthAdjust="spacingAndGlyphs">0</text>
<text transform="translate(120.4 563.1) scale(1 0.87)" font-size="15.2" fill="#a6a6a6" textLength="8.6" lengthAdjust="spacingAndGlyphs">0</text>
<rect x="135.3" y="524.0" width="2.7" height="1" fill="#6c6c6c"/>
<rect x="135.3" y="534.0" width="2.7" height="1" fill="#6c6c6c"/>
<rect x="135.3" y="544.0" width="2.7" height="1" fill="#6c6c6c"/>
<rect x="135.3" y="554.0" width="2.7" height="1" fill="#6c6c6c"/>
<rect x="111" y="563.9" width="27" height="1.2" fill="#6c6c6c"/>
<text transform="translate(120.4 577.4) scale(1 0.87)" font-size="15.2" fill="#a6a6a6" textLength="8.6" lengthAdjust="spacingAndGlyphs">1</text>
<text transform="translate(120.4 589.3) scale(1 0.87)" font-size="15.2" fill="#a6a6a6" textLength="8.6" lengthAdjust="spacingAndGlyphs">1</text>
<text transform="translate(120.4 601.2) scale(1 0.87)" font-size="15.2" fill="#a6a6a6" textLength="8.6" lengthAdjust="spacingAndGlyphs">0</text>
<text transform="translate(120.4 613.1) scale(1 0.87)" font-size="15.2" fill="#a6a6a6" textLength="8.6" lengthAdjust="spacingAndGlyphs">0</text>
<rect x="135.3" y="574.0" width="2.7" height="1" fill="#6c6c6c"/>
<rect x="135.3" y="584.0" width="2.7" height="1" fill="#6c6c6c"/>
<rect x="135.3" y="594.0" width="2.7" height="1" fill="#6c6c6c"/>
<rect x="135.3" y="604.0" width="2.7" height="1" fill="#6c6c6c"/>
<rect x="111" y="613.9" width="27" height="1.2" fill="#6c6c6c"/>
<text transform="translate(120.4 627.4) scale(1 0.87)" font-size="15.2" fill="#a6a6a6" textLength="8.6" lengthAdjust="spacingAndGlyphs">1</text>
<text transform="translate(120.4 639.3) scale(1 0.87)" font-size="15.2" fill="#a6a6a6" textLength="8.6" lengthAdjust="spacingAndGlyphs">2</text>
<text transform="translate(120.4 651.2) scale(1 0.87)" font-size="15.2" fill="#a6a6a6" textLength="8.6" lengthAdjust="spacingAndGlyphs">0</text>
<text transform="translate(120.4 663.1) scale(1 0.87)" font-size="15.2" fill="#a6a6a6" textLength="8.6" lengthAdjust="spacingAndGlyphs">0</text>
<rect x="135.3" y="624.0" width="2.7" height="1" fill="#6c6c6c"/>
<rect x="135.3" y="634.0" width="2.7" height="1" fill="#6c6c6c"/>
<rect x="135.3" y="644.0" width="2.7" height="1" fill="#6c6c6c"/>
<rect x="135.3" y="654.0" width="2.7" height="1" fill="#6c6c6c"/>
<rect x="111" y="663.9" width="27" height="1.2" fill="#6c6c6c"/>
<text transform="translate(120.4 677.4) scale(1 0.87)" font-size="15.2" fill="#a6a6a6" textLength="8.6" lengthAdjust="spacingAndGlyphs">1</text>
<text transform="translate(120.4 689.3) scale(1 0.87)" font-size="15.2" fill="#a6a6a6" textLength="8.6" lengthAdjust="spacingAndGlyphs">3</text>
<text transform="translate(120.4 701.2) scale(1 0.87)" font-size="15.2" fill="#a6a6a6" textLength="8.6" lengthAdjust="spacingAndGlyphs">0</text>
<text transform="translate(120.4 713.1) scale(1 0.87)" font-size="15.2" fill="#a6a6a6" textLength="8.6" lengthAdjust="spacingAndGlyphs">0</text>
<rect x="135.3" y="674.0" width="2.7" height="1" fill="#6c6c6c"/>
<rect x="135.3" y="684.0" width="2.7" height="1" fill="#6c6c6c"/>
<rect x="135.3" y="694.0" width="2.7" height="1" fill="#6c6c6c"/>
<rect x="135.3" y="704.0" width="2.7" height="1" fill="#6c6c6c"/>
<rect x="111" y="713.9" width="27" height="1.2" fill="#6c6c6c"/>
<text transform="translate(120.4 727.4) scale(1 0.87)" font-size="15.2" fill="#a6a6a6" textLength="8.6" lengthAdjust="spacingAndGlyphs">1</text>
<text transform="translate(120.4 739.3) scale(1 0.87)" font-size="15.2" fill="#a6a6a6" textLength="8.6" lengthAdjust="spacingAndGlyphs">4</text>
<text transform="translate(120.4 751.2) scale(1 0.87)" font-size="15.2" fill="#a6a6a6" textLength="8.6" lengthAdjust="spacingAndGlyphs">0</text>
<text transform="translate(120.4 763.1) scale(1 0.87)" font-size="15.2" fill="#a6a6a6" textLength="8.6" lengthAdjust="spacingAndGlyphs">0</text>
<rect x="135.3" y="724.0" width="2.7" height="1" fill="#6c6c6c"/>
<rect x="135.3" y="734.0" width="2.7" height="1" fill="#6c6c6c"/>
<rect x="135.3" y="744.0" width="2.7" height="1" fill="#6c6c6c"/>
<rect x="135.3" y="754.0" width="2.7" height="1" fill="#6c6c6c"/>
<rect x="111" y="763.9" width="27" height="1.2" fill="#6c6c6c"/>
<text transform="translate(120.4 777.4) scale(1 0.87)" font-size="15.2" fill="#a6a6a6" textLength="8.6" lengthAdjust="spacingAndGlyphs">1</text>
<text transform="translate(120.4 789.3) scale(1 0.87)" font-size="15.2" fill="#a6a6a6" textLength="8.6" lengthAdjust="spacingAndGlyphs">5</text>
<text transform="translate(120.4 801.2) scale(1 0.87)" font-size="15.2" fill="#a6a6a6" textLength="8.6" lengthAdjust="spacingAndGlyphs">0</text>
<text transform="translate(120.4 813.1) scale(1 0.87)" font-size="15.2" fill="#a6a6a6" textLength="8.6" lengthAdjust="spacingAndGlyphs">0</text>
<rect x="135.3" y="774.0" width="2.7" height="1" fill="#6c6c6c"/>
<rect x="135.3" y="784.0" width="2.7" height="1" fill="#6c6c6c"/>
<rect x="135.3" y="794.0" width="2.7" height="1" fill="#6c6c6c"/>
<rect x="135.3" y="804.0" width="2.7" height="1" fill="#6c6c6c"/>
<rect x="111" y="813.9" width="27" height="1.2" fill="#6c6c6c"/>
<text transform="translate(120.4 827.4) scale(1 0.87)" font-size="15.2" fill="#a6a6a6" textLength="8.6" lengthAdjust="spacingAndGlyphs">1</text>
<text transform="translate(120.4 839.3) scale(1 0.87)" font-size="15.2" fill="#a6a6a6" textLength="8.6" lengthAdjust="spacingAndGlyphs">6</text>
<text transform="translate(120.4 851.2) scale(1 0.87)" font-size="15.2" fill="#a6a6a6" textLength="8.6" lengthAdjust="spacingAndGlyphs">0</text>
<text transform="translate(120.4 863.1) scale(1 0.87)" font-size="15.2" fill="#a6a6a6" textLength="8.6" lengthAdjust="spacingAndGlyphs">0</text>
<rect x="135.3" y="824.0" width="2.7" height="1" fill="#6c6c6c"/>
<rect x="135.3" y="834.0" width="2.7" height="1" fill="#6c6c6c"/>
<rect x="135.3" y="844.0" width="2.7" height="1" fill="#6c6c6c"/>
<rect x="135.3" y="854.0" width="2.7" height="1" fill="#6c6c6c"/>
<rect x="111" y="863.9" width="27" height="1.2" fill="#6c6c6c"/>
<text transform="translate(120.4 877.4) scale(1 0.87)" font-size="15.2" fill="#a6a6a6" textLength="8.6" lengthAdjust="spacingAndGlyphs">1</text>
<text transform="translate(120.4 889.3) scale(1 0.87)" font-size="15.2" fill="#a6a6a6" textLength="8.6" lengthAdjust="spacingAndGlyphs">7</text>
<text transform="translate(120.4 901.2) scale(1 0.87)" font-size="15.2" fill="#a6a6a6" textLength="8.6" lengthAdjust="spacingAndGlyphs">0</text>
<text transform="translate(120.4 913.1) scale(1 0.87)" font-size="15.2" fill="#a6a6a6" textLength="8.6" lengthAdjust="spacingAndGlyphs">0</text>
<rect x="135.3" y="874.0" width="2.7" height="1" fill="#6c6c6c"/>
<rect x="135.3" y="884.0" width="2.7" height="1" fill="#6c6c6c"/>
<rect x="135.3" y="894.0" width="2.7" height="1" fill="#6c6c6c"/>
<rect x="135.3" y="904.0" width="2.7" height="1" fill="#6c6c6c"/>
<rect x="111" y="913.9" width="27" height="1.2" fill="#6c6c6c"/>
<text transform="translate(120.4 927.4) scale(1 0.87)" font-size="15.2" fill="#a6a6a6" textLength="8.6" lengthAdjust="spacingAndGlyphs">1</text>
<text transform="translate(120.4 939.3) scale(1 0.87)" font-size="15.2" fill="#a6a6a6" textLength="8.6" lengthAdjust="spacingAndGlyphs">8</text>
<text transform="translate(120.4 951.2) scale(1 0.87)" font-size="15.2" fill="#a6a6a6" textLength="8.6" lengthAdjust="spacingAndGlyphs">0</text>
<text transform="translate(120.4 963.1) scale(1 0.87)" font-size="15.2" fill="#a6a6a6" textLength="8.6" lengthAdjust="spacingAndGlyphs">0</text>
<rect x="135.3" y="924.0" width="2.7" height="1" fill="#6c6c6c"/>
<rect x="135.3" y="934.0" width="2.7" height="1" fill="#6c6c6c"/>
<rect x="135.3" y="944.0" width="2.7" height="1" fill="#6c6c6c"/>
<rect x="135.3" y="954.0" width="2.7" height="1" fill="#6c6c6c"/>
<rect x="111" y="963.9" width="27" height="1.2" fill="#6c6c6c"/>
<text transform="translate(120.4 977.4) scale(1 0.87)" font-size="15.2" fill="#a6a6a6" textLength="8.6" lengthAdjust="spacingAndGlyphs">1</text>
<text transform="translate(120.4 989.3) scale(1 0.87)" font-size="15.2" fill="#a6a6a6" textLength="8.6" lengthAdjust="spacingAndGlyphs">9</text>
<rect x="135.3" y="974.0" width="2.7" height="1" fill="#6c6c6c"/>
</svg>
<svg width="27" height="27" viewBox="111 135 27 27" style="position:absolute;left:111px;top:135px">
<rect x="111" y="135" width="27" height="27" fill="#505050"/>
<path d="M129.8 135 V162 M112 153.9 H138" stroke="#7a7a7a" stroke-width="1" stroke-dasharray="1 1.2" fill="none"/>
</svg>
<div id="canvas">
<svg width="1300" height="821" viewBox="138 162 1300 821" style="position:absolute;left:0;top:0;font-family:'Liberation Sans',sans-serif">
<defs>
<filter id="blur18" x="-20%" y="-200%" width="140%" height="500%"><feGaussianBlur stdDeviation="22 13"/></filter>
<filter id="ash" x="-20%" y="-20%" width="140%" height="140%"><feGaussianBlur stdDeviation="1.2"/></filter>
<linearGradient id="ared" x1="0" y1="0" x2="0.3" y2="1"><stop offset="0" stop-color="#f20a0a"/><stop offset="1" stop-color="#d40000"/></linearGradient>
<linearGradient id="shv" x1="0" y1="0" x2="0" y2="1"><stop offset="0" stop-color="#1d1809" stop-opacity="0.93"/><stop offset="0.2" stop-color="#1d1809" stop-opacity="0.76"/><stop offset="0.45" stop-color="#1d1809" stop-opacity="0.47"/><stop offset="0.7" stop-color="#1d1809" stop-opacity="0.22"/><stop offset="1" stop-color="#1d1809" stop-opacity="0.07"/></linearGradient>
<linearGradient id="shh" gradientUnits="userSpaceOnUse" x1="150" y1="0" x2="1420" y2="0"><stop offset="0.019" stop-color="#000"/><stop offset="0.033" stop-color="#808080"/><stop offset="0.047" stop-color="#fff"/><stop offset="0.9386" stop-color="#fff"/><stop offset="0.962" stop-color="#808080"/><stop offset="0.986" stop-color="#000"/></linearGradient>
<mask id="shm" maskUnits="userSpaceOnUse" x="150" y="926" width="1270" height="57"><rect x="150" y="926" width="1270" height="57" fill="url(#shh)"/></mask>
<filter id="shblur" filterUnits="userSpaceOnUse" x="60" y="820" width="1460" height="240"><feGaussianBlur stdDeviation="13 10"/></filter>
<linearGradient id="shv2" x1="0" y1="0" x2="0" y2="1"><stop offset="0" stop-color="#1d1809" stop-opacity="0.87"/><stop offset="0.194" stop-color="#1d1809" stop-opacity="0.69"/><stop offset="0.389" stop-color="#1d1809" stop-opacity="0.46"/><stop offset="0.597" stop-color="#1d1809" stop-opacity="0.27"/><stop offset="0.792" stop-color="#1d1809" stop-opacity="0.10"/><stop offset="1" stop-color="#1d1809" stop-opacity="0"/></linearGradient>
<clipPath id="band"><rect x="138" y="926" width="1300" height="57"/></clipPath>
<clipPath id="screen"><rect x="255.8" y="557.7" width="348.7" height="188"/></clipPath>
</defs>
<rect x="138" y="162" width="1300" height="16" fill="#ffe87a"/>
<rect x="138" y="178" width="1300" height="748" fill="#fff"/>
<rect x="138" y="926" width="1300" height="57" fill="#ffe478"/>
<g clip-path="url(#band)"><g mask="url(#shm)"><rect x="172" y="926.0" width="10" height="72" shape-rendering="crispEdges" fill="url(#shv2)" /><rect x="182" y="926.0" width="10" height="72" shape-rendering="crispEdges" fill="url(#shv2)" /><rect x="192" y="926.0" width="10" height="72" shape-rendering="crispEdges" fill="url(#shv2)" /><rect x="202" y="925.5" width="10" height="72" shape-rendering="crispEdges" fill="url(#shv2)" /><rect x="212" y="924.9" width="10" height="72" shape-rendering="crispEdges" fill="url(#shv2)" /><rect x="222" y="924.3" width="10" height="72" shape-rendering="crispEdges" fill="url(#shv2)" /><rect x="232" y="923.6" width="10" height="72" shape-rendering="crispEdges" fill="url(#shv2)" /><rect x="242" y="923.0" width="10" height="72" shape-rendering="crispEdges" fill="url(#shv2)" /><rect x="252" y="922.4" width="10" height="72" shape-rendering="crispEdges" fill="url(#shv2)" /><rect x="262" y="921.8" width="10" height="72" shape-rendering="crispEdges" fill="url(#shv2)" /><rect x="272" y="921.2" width="10" height="72" shape-rendering="crispEdges" fill="url(#shv2)" /><rect x="282" y="920.7" width="10" height="72" shape-rendering="crispEdges" fill="url(#shv2)" /><rect x="292" y="920.1" width="10" height="72" shape-rendering="crispEdges" fill="url(#shv2)" /><rect x="302" y="919.6" width="10" height="72" shape-rendering="crispEdges" fill="url(#shv2)" /><rect x="312" y="919.0" width="10" height="72" shape-rendering="crispEdges" fill="url(#shv2)" /><rect x="322" y="918.5" width="10" height="72" shape-rendering="crispEdges" fill="url(#shv2)" /><rect x="332" y="918.0" width="10" height="72" shape-rendering="crispEdges" fill="url(#shv2)" /><rect x="342" y="917.5" width="10" height="72" shape-rendering="crispEdges" fill="url(#shv2)" /><rect x="352" y="917.0" width="10" height="72" shape-rendering="crispEdges" fill="url(#shv2)" /><rect x="362" y="916.5" width="10" height="72" shape-rendering="crispEdges" fill="url(#shv2)" /><rect x="372" y="916.1" width="10" height="72" shape-rendering="crispEdges" fill="url(#shv2)" /><rect x="382" y="915.6" width="10" height="72" shape-rendering="crispEdges" fill="url(#shv2)" /><rect x="392" y="915.2" width="10" height="72" shape-rendering="crispEdges" fill="url(#shv2)" /><rect x="402" y="914.7" width="10" height="72" shape-rendering="crispEdges" fill="url(#shv2)" /><rect x="412" y="914.3" width="10" height="72" shape-rendering="crispEdges" fill="url(#shv2)" /><rect x="422" y="913.9" width="10" height="72" shape-rendering="crispEdges" fill="url(#shv2)" /><rect x="432" y="913.5" width="10" height="72" shape-rendering="crispEdges" fill="url(#shv2)" /><rect x="442" y="913.1" width="10" height="72" shape-rendering="crispEdges" fill="url(#shv2)" /><rect x="452" y="912.7" width="10" height="72" shape-rendering="crispEdges" fill="url(#shv2)" /><rect x="462" y="912.3" width="10" height="72" shape-rendering="crispEdges" fill="url(#shv2)" /><rect x="472" y="912.0" width="10" height="72" shape-rendering="crispEdges" fill="url(#shv2)" /><rect x="482" y="911.6" width="10" height="72" shape-rendering="crispEdges" fill="url(#shv2)" /><rect x="492" y="911.3" width="10" height="72" shape-rendering="crispEdges" fill="url(#shv2)" /><rect x="502" y="911.0" width="10" height="72" shape-rendering="crispEdges" fill="url(#shv2)" /><rect x="512" y="910.7" width="10" height="72" shape-rendering="crispEdges" fill="url(#shv2)" /><rect x="522" y="910.4" width="10" height="72" shape-rendering="crispEdges" fill="url(#shv2)" /><rect x="532" y="910.1" width="10" height="72" shape-rendering="crispEdges" fill="url(#shv2)" /><rect x="542" y="909.8" width="10" height="72" shape-rendering="crispEdges" fill="url(#shv2)" /><rect x="552" y="909.5" width="10" height="72" shape-rendering="crispEdges" fill="url(#shv2)" /><rect x="562" y="909.3" width="10" height="72" shape-rendering="crispEdges" fill="url(#shv2)" /><rect x="572" y="909.0" width="10" height="72" shape-rendering="crispEdges" fill="url(#shv2)" /><rect x="582" y="908.8" width="10" height="72" shape-rendering="crispEdges" fill="url(#shv2)" /><rect x="592" y="908.6" width="10" height="72" shape-rendering="crispEdges" fill="url(#shv2)" /><rect x="602" y="908.4" width="10" height="72" shape-rendering="crispEdges" fill="url(#shv2)" /><rect x="612" y="908.2" width="10" height="72" shape-rendering="crispEdges" fill="url(#shv2)" /><rect x="622" y="908.0" width="10" height="72" shape-rendering="crispEdges" fill="url(#shv2)" /><rect x="632" y="907.8" width="10" height="72" shape-rendering="crispEdges" fill="url(#shv2)" /><rect x="642" y="907.6" width="10" height="72" shape-rendering="crispEdges" fill="url(#shv2)" /><rect x="652" y="907.5" width="10" height="72" shape-rendering="crispEdges" fill="url(#shv2)" /><rect x="662" y="907.3" width="10" height="72" shape-rendering="crispEdges" fill="url(#shv2)" /><rect x="672" y="907.2" width="10" height="72" shape-rendering="crispEdges" fill="url(#shv2)" /><rect x="682" y="907.1" width="10" height="72" shape-rendering="crispEdges" fill="url(#shv2)" /><rect x="692" y="907.0" width="10" height="72" shape-rendering="crispEdges" fill="url(#shv2)" /><rect x="702" y="906.9" width="10" height="72" shape-rendering="crispEdges" fill="url(#shv2)" /><rect x="712" y="906.8" width="10" height="72" shape-rendering="crispEdges" fill="url(#shv2)" /><rect x="722" y="906.7" width="10" height="72" shape-rendering="crispEdges" fill="url(#shv2)" /><rect x="732" y="906.7" width="10" height="72" shape-rendering="crispEdges" fill="url(#shv2)" /><rect x="742" y="906.6" width="10" height="72" shape-rendering="crispEdges" fill="url(#shv2)" /><rect x="752" y="906.6" width="10" height="72" shape-rendering="crispEdges" fill="url(#shv2)" /><rect x="762" y="906.5" width="10" height="72" shape-rendering="crispEdges" fill="url(#shv2)" /><rect x="772" y="906.5" width="10" height="72" shape-rendering="crispEdges" fill="url(#shv2)" /><rect x="782" y="906.5" width="10" height="72" shape-rendering="crispEdges" fill="url(#shv2)" /><rect x="792" y="906.5" width="10" height="72" shape-rendering="crispEdges" fill="url(#shv2)" /><rect x="802" y="906.5" width="10" height="72" shape-rendering="crispEdges" fill="url(#shv2)" /><rect x="812" y="906.5" width="10" height="72" shape-rendering="crispEdges" fill="url(#shv2)" /><rect x="822" y="906.6" width="10" height="72" shape-rendering="crispEdges" fill="url(#shv2)" /><rect x="832" y="906.6" width="10" height="72" shape-rendering="crispEdges" fill="url(#shv2)" /><rect x="842" y="906.7" width="10" height="72" shape-rendering="crispEdges" fill="url(#shv2)" /><rect x="852" y="906.8" width="10" height="72" shape-rendering="crispEdges" fill="url(#shv2)" /><rect x="862" y="906.8" width="10" height="72" shape-rendering="crispEdges" fill="url(#shv2)" /><rect x="872" y="906.9" width="10" height="72" shape-rendering="crispEdges" fill="url(#shv2)" /><rect x="882" y="907.0" width="10" height="72" shape-rendering="crispEdges" fill="url(#shv2)" /><rect x="892" y="907.1" width="10" height="72" shape-rendering="crispEdges" fill="url(#shv2)" /><rect x="902" y="907.3" width="10" height="72" shape-rendering="crispEdges" fill="url(#shv2)" /><rect x="912" y="907.4" width="10" height="72" shape-rendering="crispEdges" fill="url(#shv2)" /><rect x="922" y="907.6" width="10" height="72" shape-rendering="crispEdges" fill="url(#shv2)" /><rect x="932" y="907.7" width="10" height="72" shape-rendering="crispEdges" fill="url(#shv2)" /><rect x="942" y="907.9" width="10" height="72" shape-rendering="crispEdges" fill="url(#shv2)" /><rect x="952" y="908.1" width="10" height="72" shape-rendering="crispEdges" fill="url(#shv2)" /><rect x="962" y="908.3" width="10" height="72" shape-rendering="crispEdges" fill="url(#shv2)" /><rect x="972" y="908.5" width="10" height="72" shape-rendering="crispEdges" fill="url(#shv2)" /><rect x="982" y="908.7" width="10" height="72" shape-rendering="crispEdges" fill="url(#shv2)" /><rect x="992" y="908.9" width="10" height="72" shape-rendering="crispEdges" fill="url(#shv2)" /><rect x="1002" y="909.1" width="10" height="72" shape-rendering="crispEdges" fill="url(#shv2)" /><rect x="1012" y="909.4" width="10" height="72" shape-rendering="crispEdges" fill="url(#shv2)" /><rect x="1022" y="909.6" width="10" height="72" shape-rendering="crispEdges" fill="url(#shv2)" /><rect x="1032" y="909.9" width="10" height="72" shape-rendering="crispEdges" fill="url(#shv2)" /><rect x="1042" y="910.2" width="10" height="72" shape-rendering="crispEdges" fill="url(#shv2)" /><rect x="1052" y="910.5" width="10" height="72" shape-rendering="crispEdges" fill="url(#shv2)" /><rect x="1062" y="910.8" width="10" height="72" shape-rendering="crispEdges" fill="url(#shv2)" /><rect x="1072" y="911.1" width="10" height="72" shape-rendering="crispEdges" fill="url(#shv2)" /><rect x="1082" y="911.4" width="10" height="72" shape-rendering="crispEdges" fill="url(#shv2)" /><rect x="1092" y="911.8" width="10" height="72" shape-rendering="crispEdges" fill="url(#shv2)" /><rect x="1102" y="912.1" width="10" height="72" shape-rendering="crispEdges" fill="url(#shv2)" /><rect x="1112" y="912.5" width="10" height="72" shape-rendering="crispEdges" fill="url(#shv2)" /><rect x="1122" y="912.9" width="10" height="72" shape-rendering="crispEdges" fill="url(#shv2)" /><rect x="1132" y="913.2" width="10" height="72" shape-rendering="crispEdges" fill="url(#shv2)" /><rect x="1142" y="913.6" width="10" height="72" shape-rendering="crispEdges" fill="url(#shv2)" /><rect x="1152" y="914.0" width="10" height="72" shape-rendering="crispEdges" fill="url(#shv2)" /><rect x="1162" y="914.5" width="10" height="72" shape-rendering="crispEdges" fill="url(#shv2)" /><rect x="1172" y="914.9" width="10" height="72" shape-rendering="crispEdges" fill="url(#shv2)" /><rect x="1182" y="915.3" width="10" height="72" shape-rendering="crispEdges" fill="url(#shv2)" /><rect x="1192" y="915.8" width="10" height="72" shape-rendering="crispEdges" fill="url(#shv2)" /><rect x="1202" y="916.2" width="10" height="72" shape-rendering="crispEdges" fill="url(#shv2)" /><rect x="1212" y="916.7" width="10" height="72" shape-rendering="crispEdges" fill="url(#shv2)" /><rect x="1222" y="917.2" width="10" height="72" shape-rendering="crispEdges" fill="url(#shv2)" /><rect x="1232" y="917.7" width="10" height="72" shape-rendering="crispEdges" fill="url(#shv2)" /><rect x="1242" y="918.2" width="10" height="72" shape-rendering="crispEdges" fill="url(#shv2)" /><rect x="1252" y="918.7" width="10" height="72" shape-rendering="crispEdges" fill="url(#shv2)" /><rect x="1262" y="919.2" width="10" height="72" shape-rendering="crispEdges" fill="url(#shv2)" /><rect x="1272" y="919.8" width="10" height="72" shape-rendering="crispEdges" fill="url(#shv2)" /><rect x="1282" y="920.3" width="10" height="72" shape-rendering="crispEdges" fill="url(#shv2)" /><rect x="1292" y="920.9" width="10" height="72" shape-rendering="crispEdges" fill="url(#shv2)" /><rect x="1302" y="921.5" width="10" height="72" shape-rendering="crispEdges" fill="url(#shv2)" /><rect x="1312" y="922.1" width="10" height="72" shape-rendering="crispEdges" fill="url(#shv2)" /><rect x="1322" y="922.7" width="10" height="72" shape-rendering="crispEdges" fill="url(#shv2)" /><rect x="1332" y="923.3" width="10" height="72" shape-rendering="crispEdges" fill="url(#shv2)" /><rect x="1342" y="923.9" width="10" height="72" shape-rendering="crispEdges" fill="url(#shv2)" /><rect x="1352" y="924.5" width="10" height="72" shape-rendering="crispEdges" fill="url(#shv2)" /><rect x="1362" y="925.2" width="10" height="72" shape-rendering="crispEdges" fill="url(#shv2)" /><rect x="1372" y="925.8" width="10" height="72" shape-rendering="crispEdges" fill="url(#shv2)" /><rect x="1382" y="926.0" width="10" height="72" shape-rendering="crispEdges" fill="url(#shv2)" /><rect x="1392" y="926.0" width="10" height="72" shape-rendering="crispEdges" fill="url(#shv2)" /><rect x="1402" y="926.0" width="10" height="72" shape-rendering="crispEdges" fill="url(#shv2)" /></g></g>
<line x1="162.7" y1="944" x2="162.7" y2="983" stroke="#222" stroke-width="1.2"/>
<g><line x1="172.5" y1="178" x2="172.5" y2="926" stroke="#111" stroke-width="1.3"/><line x1="233.2" y1="178" x2="233.2" y2="926" stroke="#111" stroke-width="1.3"/><line x1="293.8" y1="178" x2="293.8" y2="926" stroke="#111" stroke-width="1.3"/><line x1="354.5" y1="178" x2="354.5" y2="926" stroke="#111" stroke-width="1.3"/><line x1="415.0" y1="178" x2="415.0" y2="201.5" stroke="#111" stroke-width="1.3"/><line x1="415.0" y1="790" x2="415.0" y2="926" stroke="#111" stroke-width="1.3"/><line x1="475.6" y1="178" x2="475.6" y2="926" stroke="#111" stroke-width="1.3"/><line x1="536.3" y1="349" x2="536.3" y2="926" stroke="#111" stroke-width="1.3"/><line x1="138" y1="259.9" x2="400" y2="259.9" stroke="#111" stroke-width="1.3"/><line x1="450.4" y1="259.9" x2="523.7" y2="259.9" stroke="#111" stroke-width="1.3"/><line x1="540" y1="259.9" x2="577" y2="259.9" stroke="#111" stroke-width="1.3"/><line x1="138" y1="320.4" x2="400" y2="320.4" stroke="#111" stroke-width="1.3"/><line x1="450.4" y1="320.4" x2="523.7" y2="320.4" stroke="#111" stroke-width="1.3"/><line x1="540" y1="320.4" x2="577" y2="320.4" stroke="#111" stroke-width="1.3"/><line x1="138" y1="381.1" x2="577" y2="381.1" stroke="#111" stroke-width="1.3"/><line x1="138" y1="441.8" x2="576" y2="441.8" stroke="#111" stroke-width="1.3"/><line x1="138" y1="502.4" x2="576" y2="502.4" stroke="#111" stroke-width="1.3"/><line x1="138" y1="563.1" x2="260" y2="563.1" stroke="#111" stroke-width="1.3"/><line x1="138" y1="623.7" x2="260" y2="623.7" stroke="#111" stroke-width="1.3"/><line x1="138" y1="684.4" x2="260" y2="684.4" stroke="#111" stroke-width="1.3"/><line x1="600" y1="623.7" x2="695" y2="623.7" stroke="#111" stroke-width="1.3"/><line x1="138" y1="745.0" x2="554.5" y2="745.0" stroke="#111" stroke-width="1.3"/><line x1="138" y1="805.6" x2="554.5" y2="805.6" stroke="#111" stroke-width="1.3"/><line x1="138" y1="866.2" x2="554.5" y2="866.2" stroke="#111" stroke-width="1.3"/><line x1="1092.1" y1="833.3" x2="1092.1" y2="926" stroke="#111" stroke-width="1.3"/><line x1="1152.7" y1="833.3" x2="1152.7" y2="926" stroke="#111" stroke-width="1.3"/><line x1="1213.4" y1="833.3" x2="1213.4" y2="926" stroke="#111" stroke-width="1.3"/><line x1="1274.0" y1="464" x2="1274.0" y2="926" stroke="#111" stroke-width="1.3"/><line x1="1334.6" y1="464" x2="1334.6" y2="926" stroke="#111" stroke-width="1.3"/><line x1="1395.3" y1="464" x2="1395.3" y2="926" stroke="#111" stroke-width="1.3"/><line x1="1251.3" y1="562.4" x2="1438" y2="562.4" stroke="#111" stroke-width="1.3"/><line x1="1251.3" y1="623.1" x2="1438" y2="623.1" stroke="#111" stroke-width="1.3"/><line x1="1251.3" y1="683.8" x2="1438" y2="683.8" stroke="#111" stroke-width="1.3"/><line x1="1251.3" y1="744.5" x2="1438" y2="744.5" stroke="#111" stroke-width="1.3"/><line x1="1251.3" y1="805.2" x2="1438" y2="805.2" stroke="#111" stroke-width="1.3"/><line x1="993.4" y1="865.9" x2="1438" y2="865.9" stroke="#111" stroke-width="1.3"/><line x1="993.4" y1="926" x2="1438" y2="926" stroke="#111" stroke-width="1.2"/></g>
<path d="M208.4 283.9 V264.8 A17 17 0 0 1 225.4 247.8 H283.8 A17 17 0 0 1 300.8 264.8 V283.9 H288.6 V266.4 A6 6 0 0 0 282.6 260.4 H226.6 A6 6 0 0 0 220.6 266.4 V283.9 Z" fill="#000"/>
<g font-weight="bold" fill="#000" stroke="#000" stroke-linejoin="miter">
<text x="205.7" y="319.9" font-size="38" stroke-width="2.9" textLength="102.4" lengthAdjust="spacingAndGlyphs">DATA</text>
<text x="204.4" y="358.4" font-size="38" stroke-width="2.9" textLength="104.8" lengthAdjust="spacingAndGlyphs">SAFE</text>
</g>
<rect x="263.5" y="366" width="47.6" height="22.5" rx="8" fill="#000"/>
<text x="269.5" y="383" font-size="15.8" font-weight="bold" fill="#fff" stroke="#fff" stroke-width="0.5" textLength="35.5" lengthAdjust="spacingAndGlyphs">APP</text>
<path d="M382.7 786 L478.6 786 C477 800 475.5 815 476.5 828 C478 836 481 841 486 845 L374 845 C379 841 383 836 384.8 828 C386 815 384.5 800 382.7 786 Z" fill="#202027"/>
<rect x="382.7" y="787" width="95.9" height="15" fill="#0f0f14"/>
<rect x="369.8" y="843.4" width="120.2" height="10.3" rx="5" fill="#0f0f14"/>
<path d="M439 341 C386 341 339 402 339 464 C339 485 342.5 503 348 517 L527 517 C533.5 503 538.3 485 538.3 462 C538.3 400 492 341 439 341 Z" fill="#202027"/>
<path d="M262.5 548 C266 531 302 520 349 513.5 L527 513.5 C574 519 593 527 597.5 534.5 C601 537 603.5 541 605.5 548 Z" fill="#202027"/>
<rect x="242.7" y="543.8" width="372.9" height="243.6" rx="14" fill="#202027"/>
<path d="M255.8 745.7 V566.5 Q255.8 557.7 264.6 557.7 H596.4 Q605.2 557.7 605.2 566.5 V745.7 Z" fill="#ffe87a"/>
<path d="M350 540 L526 540 L505.6 558.2 L470 602 Q468.6 603.8 466.4 603 L438.2 593.2 L408.8 602.4 Q406.6 603.2 405.2 601.2 Q386 580 370.7 557.9 Z" fill="#202027"/>
<rect x="264.6" y="566.5" width="7.6" height="7.6" fill="#efeff6"/>
<rect x="266.2" y="583.6" width="7.6" height="7.6" fill="#efeff6"/>
<rect x="278.9" y="589.6" width="7.6" height="7.6" fill="#efeff6"/>
<rect x="587" y="691.8" width="7.6" height="7.6" fill="#efeff6"/>
<rect x="585" y="709.8" width="7.6" height="7.6" fill="#efeff6"/>
<rect x="572.6" y="714.9" width="7.6" height="7.6" fill="#efeff6"/>
<rect x="275.3" y="574.8" width="7.2" height="7.2" fill="#d9b160"/>
<rect x="257.4" y="595.5" width="7.2" height="7.2" fill="#d9b160"/>
<rect x="257.4" y="606.7" width="7.2" height="7.2" fill="#d9b160"/>
<rect x="577" y="701" width="7.2" height="7.2" fill="#d9b160"/>
<rect x="594.5" y="721.3" width="7.2" height="7.2" fill="#d9b160"/>
<rect x="594.5" y="732.8" width="7.2" height="7.2" fill="#d9b160"/>
<rect x="239.5" y="631.3" width="31.0" height="15.2" rx="7" fill="#202027"/>
<rect x="237.5" y="644" width="35.8" height="15.0" rx="7" fill="#202027"/>
<rect x="238.3" y="657.6" width="33.4" height="14.4" rx="7" fill="#202027"/>
<rect x="239.5" y="670.3" width="27.9" height="13.6" rx="7" fill="#202027"/>
<rect x="590.5" y="631.3" width="31.1" height="15.2" rx="7" fill="#202027"/>
<rect x="587" y="644" width="36.6" height="15.0" rx="7" fill="#202027"/>
<rect x="588.5" y="657.6" width="34.3" height="14.4" rx="7" fill="#202027"/>
<rect x="592.5" y="670.3" width="29.1" height="13.6" rx="7" fill="#202027"/>
<path d="M364.4 440 Q437 414.5 506.8 437.6 C516 480 502 528 442.3 563.9 C405 540 368 500 364.4 440 Z" fill="#ffe87a"/>
<g fill="none" stroke="#ffe87a" stroke-width="2.1" stroke-linecap="round">
<path d="M358.4 437.5 C358 480 372 515 388.5 535.6"/><path d="M517.6 465.8 C514 495 503 520 489.9 535.6"/><path d="M418.1 421.4 Q466 411.5 511.4 428.1"/></g>
<defs><clipPath id="eyeL"><ellipse cx="436.3" cy="469.5" rx="25.3" ry="26.8"/></clipPath><clipPath id="eyeR"><ellipse cx="477.5" cy="466.4" rx="23" ry="27.1"/></clipPath></defs>
<ellipse cx="477.5" cy="466.4" rx="23.4" ry="27.5" fill="#fdb921" stroke="#000" stroke-width="1.2"/>
<g clip-path="url(#eyeR)"><path d="M455 463.2 L502 465.9" stroke="#000" stroke-width="7.4"/><path d="M455 463.2 L502 465.9" stroke="#fff" stroke-width="5"/><path d="M455 463.2 L467.8 463.9" stroke="#000" stroke-width="7.4"/></g>
<ellipse cx="436.3" cy="469.5" rx="25.7" ry="27.2" fill="#fdb921" stroke="#000" stroke-width="1.2"/>
<g clip-path="url(#eyeL)"><path d="M409 469.6 Q437 467.6 463 464.4" fill="none" stroke="#000" stroke-width="7.6"/><path d="M409 469.6 Q437 467.6 463 464.4" fill="none" stroke="#fff" stroke-width="5.2"/><path d="M409 469.6 L420.6 468.8" stroke="#000" stroke-width="7.6"/></g>
<g fill="none" stroke="#0a0a0a" stroke-width="3.9" stroke-linecap="round"><path d="M423.5 433.3 Q436 439.7 450.3 440"/><path d="M457.5 438.6 Q471 436.2 481.8 430.3"/></g>
<path d="M402 498.2 C410 508 437 520 459.3 513.8" fill="none" stroke="#111" stroke-width="10.8" stroke-linecap="round"/>
<path d="M402 498.2 C410 508 437 520 459.3 513.8" fill="none" stroke="#ff9fe2" stroke-width="8.2" stroke-linecap="round"/>
<path d="M402 498.2 C410 508 437 520 459.3 513.8" fill="none" stroke="#111" stroke-width="1.2" stroke-linecap="round"/>
<ellipse cx="425.0" cy="625.4" rx="18.7" ry="10.9" transform="rotate(-103.8 425.0 625.4)" fill="#ff9fe0" stroke="#111" stroke-width="0.9"/>
<line x1="426.2" y1="630.2" x2="422.8" y2="616.1" stroke="#111" stroke-width="0.8"/>
<ellipse cx="441.2" cy="627.4" rx="17.8" ry="10.9" transform="rotate(-67.7 441.2 627.4)" fill="#ff9fe0" stroke="#111" stroke-width="0.9"/>
<line x1="439.4" y1="631.9" x2="444.7" y2="619.0" stroke="#111" stroke-width="0.8"/>
<ellipse cx="457.1" cy="641.2" rx="19.6" ry="10.9" transform="rotate(-21.5 457.1 641.2)" fill="#ff9fe0" stroke="#111" stroke-width="0.9"/>
<line x1="452.5" y1="643.0" x2="466.6" y2="637.5" stroke="#111" stroke-width="0.8"/>
<ellipse cx="459.3" cy="658.0" rx="20.7" ry="10.9" transform="rotate(13.4 459.3 658.0)" fill="#ff9fe0" stroke="#111" stroke-width="0.9"/>
<line x1="454.5" y1="656.8" x2="469.9" y2="660.5" stroke="#111" stroke-width="0.8"/>
<ellipse cx="444.6" cy="674.2" rx="18.4" ry="10.9" transform="rotate(60.1 444.6 674.2)" fill="#ff9fe0" stroke="#111" stroke-width="0.9"/>
<line x1="442.2" y1="670.0" x2="449.3" y2="682.4" stroke="#111" stroke-width="0.8"/>
<ellipse cx="426.7" cy="676.9" rx="18.0" ry="10.9" transform="rotate(100.3 426.7 676.9)" fill="#ff9fe0" stroke="#111" stroke-width="0.9"/>
<line x1="427.6" y1="672.1" x2="425.1" y2="685.9" stroke="#111" stroke-width="0.8"/>
<ellipse cx="409.3" cy="670.5" rx="21.3" ry="10.9" transform="rotate(139.0 409.3 670.5)" fill="#ff9fe0" stroke="#111" stroke-width="0.9"/>
<line x1="413.1" y1="667.2" x2="400.8" y2="677.9" stroke="#111" stroke-width="0.8"/>
<ellipse cx="399.8" cy="652.1" rx="23.6" ry="10.9" transform="rotate(178.5 399.8 652.1)" fill="#ff9fe0" stroke="#111" stroke-width="0.9"/>
<line x1="404.9" y1="652.0" x2="387.2" y2="652.4" stroke="#111" stroke-width="0.8"/>
<ellipse cx="408.0" cy="633.8" rx="21.2" ry="10.9" transform="rotate(-143.1 408.0 633.8)" fill="#ff9fe0" stroke="#111" stroke-width="0.9"/>
<line x1="412.0" y1="636.8" x2="399.1" y2="627.1" stroke="#111" stroke-width="0.8"/>
<ellipse cx="431.4" cy="651.3" rx="31" ry="19.5" fill="#ffe87a" stroke="#111" stroke-width="0.9"/>
<ellipse cx="441.8" cy="645.8" rx="8.8" ry="10.2" fill="#fff" stroke="#000" stroke-width="1"/><ellipse cx="423" cy="646.2" rx="9.4" ry="10.5" fill="#fff" stroke="#000" stroke-width="1"/>
<ellipse cx="424" cy="647" rx="5.6" ry="8" fill="#000" transform="rotate(12 424 647)"/><ellipse cx="441" cy="646.6" rx="5.4" ry="7.8" fill="#000" transform="rotate(12 441 646.6)"/>
<circle cx="420.6" cy="641.8" r="1.7" fill="#fff"/><circle cx="438" cy="641.3" r="1.7" fill="#fff"/>
<path d="M415.6 638.6 L412.8 635.6 M417.6 637.2 L415.6 633.8 M419.8 636.2 L418.8 632.8 M446.6 636 L447.8 632.6 M448.8 637 L450.8 633.8 M450.6 638.6 L453.2 635.8" stroke="#111" stroke-width="0.8" fill="none"/>
<circle cx="410.5" cy="656" r="2.9" fill="#ff4a4a"/><circle cx="453" cy="656" r="2.9" fill="#ff4a4a"/>
<path d="M418.4 659.5 Q427 657 435.8 659.5 Q434 667.5 427 667.3 Q420 667 418.4 659.5 Z" fill="#fff" stroke="#000" stroke-width="0.9"/>
<path d="M422.5 659 L423.5 666.5 M427 658.5 V667.3 M431.3 659 L430.5 666.5" stroke="#000" stroke-width="0.7" fill="none"/>
<rect x="390" y="710.9" width="79.7" height="16.9" rx="8.4" fill="#fff"/>
<g stroke="#2e1a7a" stroke-width="1.1"><line x1="402.3" y1="716.4" x2="402.3" y2="723.2"/><line x1="399.40000000000003" y1="718.1" x2="405.2" y2="721.5"/><line x1="399.40000000000003" y1="721.5" x2="405.2" y2="718.1"/></g>
<g stroke="#2e1a7a" stroke-width="1.1"><line x1="413.2" y1="716.4" x2="413.2" y2="723.2"/><line x1="410.3" y1="718.1" x2="416.09999999999997" y2="721.5"/><line x1="410.3" y1="721.5" x2="416.09999999999997" y2="718.1"/></g>
<g stroke="#2e1a7a" stroke-width="1.1"><line x1="424.2" y1="716.4" x2="424.2" y2="723.2"/><line x1="421.3" y1="718.1" x2="427.09999999999997" y2="721.5"/><line x1="421.3" y1="721.5" x2="427.09999999999997" y2="718.1"/></g>
<g stroke="#2e1a7a" stroke-width="1.1"><line x1="435" y1="716.4" x2="435" y2="723.2"/><line x1="432.1" y1="718.1" x2="437.9" y2="721.5"/><line x1="432.1" y1="721.5" x2="437.9" y2="718.1"/></g>
<g stroke="#2e1a7a" stroke-width="1.1"><line x1="446.1" y1="716.4" x2="446.1" y2="723.2"/><line x1="443.20000000000005" y1="718.1" x2="449.0" y2="721.5"/><line x1="443.20000000000005" y1="721.5" x2="449.0" y2="718.1"/></g>
<g stroke="#2e1a7a" stroke-width="1.1"><line x1="457" y1="716.4" x2="457" y2="723.2"/><line x1="454.1" y1="718.1" x2="459.9" y2="721.5"/><line x1="454.1" y1="721.5" x2="459.9" y2="718.1"/></g>
<g fill="none" stroke="#111" stroke-width="1.4"><path d="M206.4 536.7 V574.5 H223.7"/><path d="M223.7 527.9 V605.5 H259"/><path d="M643.5 612 V645.4 L659.6 662"/><path d="M659.6 607.5 V703 H601"/><path d="M673.9 638.2 V683.4 H659.6"/></g><circle cx="206.5" cy="536.6" r="3.6" fill="#16161b"/><circle cx="223.6" cy="527.9" r="3.6" fill="#16161b"/><circle cx="643.5" cy="611.8" r="3.6" fill="#16161b"/><circle cx="659.4" cy="607.5" r="3.6" fill="#16161b"/><circle cx="673.7" cy="638.1" r="3.6" fill="#16161b"/>
<g font-size="16.2" fill="#111" stroke="#111" stroke-width="0.6">
<text x="790.1" y="321.3" textLength="91.3" lengthAdjust="spacingAndGlyphs">WORKSHOP</text>
<text x="907" y="321.3" textLength="103" lengthAdjust="spacingAndGlyphs">DOWNLOADS</text>
<text x="1031" y="321.3" textLength="103" lengthAdjust="spacingAndGlyphs">PROTECTION</text>
<text x="1166.5" y="321.3" textLength="42.5" lengthAdjust="spacingAndGlyphs">BLOG</text>
<text x="1250.5" y="321.3" textLength="74.5" lengthAdjust="spacingAndGlyphs">CONTACT</text>
</g>
<path d="M715.2 447 L729.4 398.7 H742.8 L757 447 H744.9 L742.4 437.3 H729.8 L727.3 447 Z M736.1 410 L741.6 428.6 H730.6 Z M752.1 398.7 H788.7 V409.9 H775.8 V447.0 H765 V409.9 H752.1 Z M790.3 398.7 H826.3 V409.9 H814 V447.0 H802.6 V409.9 H790.3 Z M829.1 398.7 H863.9 V409.8 H839.9 V417.8 H858 V427.3 H839.9 V436 H863.9 V447 H829.1 Z M866.1 447.0 V398.7 H877.7 L891.9 428.5 V398.7 H903.5 V447.0 H891.9 L877.7 417.2 V447.0 Z M906.4 398.7 H942.4 V409.9 H930.1 V447.0 H918.7 V409.9 H906.4 Z M945.9 398.7 H957.9 V447.0 H945.9 Z M980 398.2 C991 398.2 998.7 405 998.7 416 V430 C998.7 441 991 447.6 980 447.6 C969 447.6 961.4 441 961.4 430 V416 C961.4 405 969 398.2 980 398.2 Z M980 408 C975 408 972.4 410.8 972.4 416 V430 C972.4 435.2 975 437.9 980 437.9 C985 437.9 987.7 435.2 987.7 430 V416 C987.7 410.8 985 408 980 408 Z M1001.6 447.0 V398.7 H1013.2 L1027.3000000000002 428.5 V398.7 H1038.9 V447.0 H1027.3000000000002 L1013.2 417.2 V447.0 Z M1046.5 398.7 H1059.2 L1057.2 431.6 H1048.6 Z" fill="#ffe87a" stroke="#0d0d0d" stroke-width="2.6" stroke-linejoin="round" fill-rule="evenodd"/>
<circle cx="1052.3" cy="440.8" r="6.3" fill="#ffe87a" stroke="#0d0d0d" stroke-width="2.6"/>
<g font-size="39.3" font-weight="bold" fill="#000" stroke="#000" stroke-width="1.2">
<text x="715.7" y="505.4" textLength="390.3" lengthAdjust="spacingAndGlyphs">Find out how you can</text>
<text x="715.7" y="555.2" textLength="336" lengthAdjust="spacingAndGlyphs">protect your data<tspan>:</tspan></text>
</g>
<rect x="718" y="591" width="384" height="37.5" rx="1.5" fill="#fff" stroke="#111" stroke-width="2"/>
<rect x="718" y="645" width="384" height="38" rx="1.5" fill="#ffe87a" stroke="#111" stroke-width="2"/>
<text x="855.5" y="671.5" font-size="20" fill="#111" stroke="#111" stroke-width="0.75" textLength="109.5" lengthAdjust="spacingAndGlyphs">NEXT STEP</text>
<g font-size="10.6" fill="#1a1a1a">
<text x="725" y="719.2" textLength="340" lengthAdjust="spacingAndGlyphs">Lorem ipsum dolor sit amet, consectetur adipiscing elit, sed do eiusmod</text>
<text x="725" y="732.7" textLength="359.5" lengthAdjust="spacingAndGlyphs">tempor incididunt ut labore et dolore magna aliqua. Quis ipsum suspendisse</text>
<text x="725" y="746.1" textLength="374" lengthAdjust="spacingAndGlyphs">ultrices gravida. Risus commodo viverra maecenas accumsan lacus vel facilisis.</text>
</g>
<path d="M904 788.5 L880 830 L928 830 Z" fill="#000" stroke="#000" stroke-width="45.6" stroke-linejoin="round"/>
<path d="M904 788.5 L880 830 L928 830 Z" fill="#fff" stroke="#fff" stroke-width="40.6" stroke-linejoin="round"/>
<path d="M904 778 C898.5 778 897.8 788 898.6 798 C899.6 811 902 821 904.6 831.6 C906.6 821 909 811 909.6 798 C910.2 788 909.5 778 904 778 Z" fill="#ffe87a" stroke="#111" stroke-width="1"/>
<circle cx="904.9" cy="838.7" r="5.6" fill="#ffe87a" stroke="#111" stroke-width="1"/>
<rect x="1194.9" y="609.4" width="104.3" height="34.2" rx="12" fill="#fff" stroke="#000" stroke-width="3"/>
<path d="M1206.3 618.9 L1222 634.1 M1222 618.9 L1206.3 634.1" stroke="#000" stroke-width="2.7" fill="none"/>
<path d="M1234.1 626.5 H1254" stroke="#000" stroke-width="3"/>
<rect x="1263" y="618.6" width="25" height="15.8" fill="#fff" stroke="#000" stroke-width="2.9"/>
<g transform="translate(1335 769.1) rotate(64.3)">
<rect x="28" y="-3.2" width="18" height="6.4" fill="#ffe87a" stroke="#000" stroke-width="2.5"/>
<rect x="43.9" y="-8.8" width="37.4" height="17.6" fill="#ffe87a" stroke="#000" stroke-width="2.7"/>
<rect x="40" y="-1.95" width="6" height="3.9" fill="#ffe87a"/>
</g>
<circle cx="1335" cy="769.1" r="29.6" fill="none" stroke="#000" stroke-width="8.6"/>
<circle cx="1335" cy="769.1" r="29.6" fill="none" stroke="#ffe87a" stroke-width="3.3"/>
<path d="M966.2 189.2 L791.2 277.4 L791.4 272.3 Q791 267.5 786.8 269.8 Q785 271 784 272.6 L767.4 299.8 L801.5 299.6 Q806.5 299 805.8 294.5 Q805 291.8 801.8 291.6 L800.4 291.8 L967.3 190.5 Z" fill="#555" opacity="0.55" transform="translate(0.8 1.3)" filter="url(#ash)"/>
<path d="M966.2 189.2 L791.2 277.4 L791.4 272.3 Q791 267.5 786.8 269.8 Q785 271 784 272.6 L767.4 299.8 L801.5 299.6 Q806.5 299 805.8 294.5 Q805 291.8 801.8 291.6 L800.4 291.8 L967.3 190.5 Z" fill="url(#ared)"/>
</svg>
</div>
<div id="vscroll"><div style="position:absolute;left:25px;top:0;width:4px;height:849px;background:#3e3e3e"></div><div style="position:absolute;left:2.8px;top:305.5px;width:19px;height:279px;background:#6b6b6b;border-radius:3px"></div>
<svg width="29" height="849" style="position:absolute;left:0;top:0"><path d="M8.6 21 L13.6 16 L18.6 21" fill="none" stroke="#9c9c9c" stroke-width="1.3"/><path d="M8.6 830.5 L13.2 835 L17.8 830.5" fill="none" stroke="#9c9c9c" stroke-width="1.3"/></svg></div>
<div id="sep3"></div>
<div id="status">
<div style="position:absolute;left:0;top:0;width:72px;height:22px;background:#424242"></div>
<div style="position:absolute;left:72px;top:0;width:275px;height:22px;background:#535353"></div>
<div style="position:absolute;left:1327px;top:0;width:29px;height:22px;background:#505050"></div>
<div style="position:absolute;left:690.2px;top:3.4px;width:295px;height:17px;background:#6b6b6b;border-radius:3px"></div>
<span style="position:absolute;left:18px;top:1.5px;font-size:17px;color:#e4e4e4">50%</span>
<span style="position:absolute;left:98px;top:2px;font-size:16.7px;color:#cdcdcd;white-space:nowrap;letter-spacing:-0.1px">3553 px x 2000 px (300 ppi)</span>
<svg width="1356" height="22" style="position:absolute;left:0;top:0"><path d="M333.5 5.8 L338 12 L333.5 18.2" fill="none" stroke="#cfcfcf" stroke-width="1.2"/><path d="M364.6 7.8 L360.6 12.4 L364.6 17" fill="none" stroke="#858585" stroke-width="1.2"/><path d="M1310.6 7.8 L1314.6 12.4 L1310.6 17" fill="none" stroke="#858585" stroke-width="1.2"/></svg>
</div>
<div id="edgeR"></div>
</body></html>
